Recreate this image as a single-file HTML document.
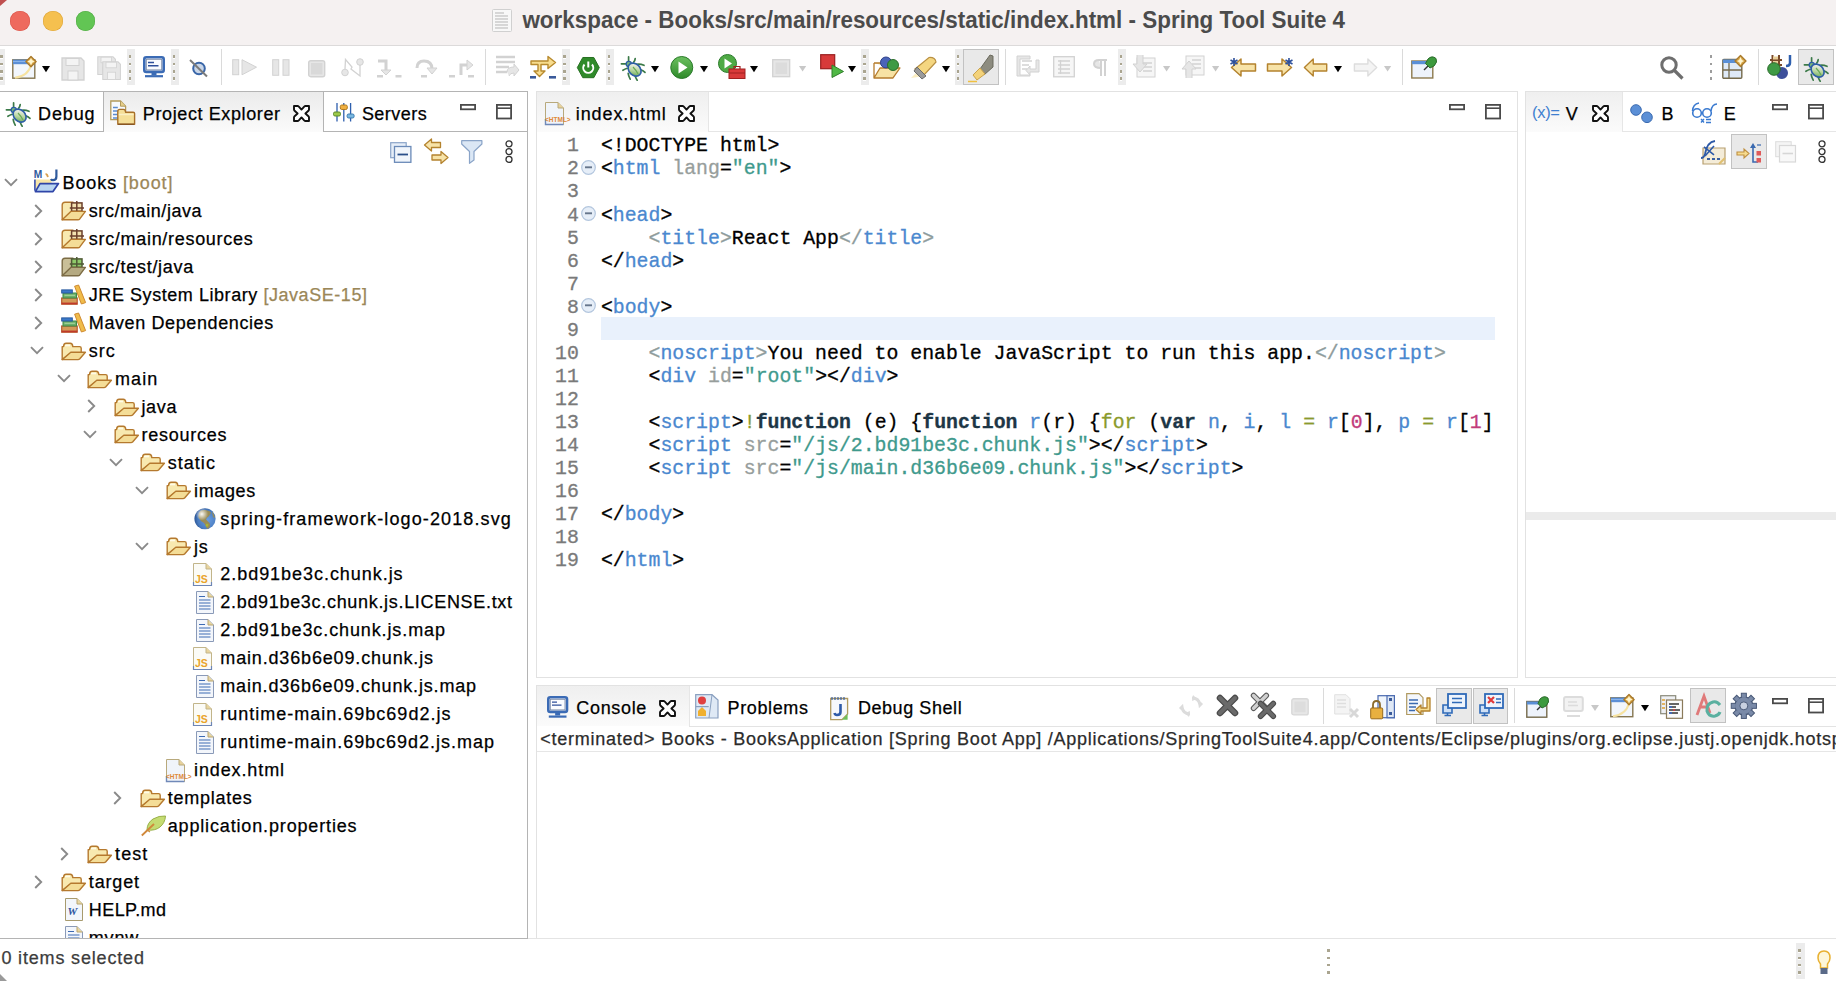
<!DOCTYPE html><html><head><meta charset="utf-8"><style>
*{margin:0;padding:0;box-sizing:border-box}
html,body{width:1836px;height:981px;overflow:hidden;background:#fff;position:relative;font-family:"Liberation Sans",sans-serif}
.t{position:absolute;font-size:18px;line-height:28px;white-space:pre;color:#000;-webkit-text-stroke:0.25px currentColor}
.m{position:absolute;font-family:"Liberation Mono",monospace;font-size:19.83px;line-height:23px;white-space:pre;color:#000;transform:scaleY(1.06);transform-origin:0 17px;-webkit-text-stroke:0.3px currentColor}
svg{overflow:visible}
</style></head><body>

<div style="position:absolute;left:0px;top:0px;width:1836px;height:45px;background:#f5f1f1"></div>
<div style="position:absolute;left:0px;top:44.5px;width:1836px;height:1.4px;background:#dcdada"></div>
<div style="position:absolute;left:10.1px;top:11.3px;width:19.6px;height:19.6px;border-radius:50%;background:#ee6a5e;box-shadow:inset 0 0 0 0.5px #d9574c"></div>
<div style="position:absolute;left:43.0px;top:11.3px;width:19.6px;height:19.6px;border-radius:50%;background:#f5c04f;box-shadow:inset 0 0 0 0.5px #dca43a"></div>
<div style="position:absolute;left:75.9px;top:11.3px;width:19.6px;height:19.6px;border-radius:50%;background:#62c554;box-shadow:inset 0 0 0 0.5px #52ab45"></div>
<svg style="position:absolute;left:492px;top:9px" width="20" height="23" viewBox="0 0 20 23"><rect x="0.5" y="0.5" width="19" height="22" rx="1" fill="#f8f8f8" stroke="#d0d0d0"/><path d="M3 4h9M3 7h13M3 10h13M3 13h13M3 16h13M3 19h13" stroke="#b5b5b5" stroke-width="1"/></svg>
<div style="position:absolute;left:522.4px;top:10.4px;font-weight:bold;font-size:22.4px;line-height:22.4px;white-space:pre;color:#4b4b4b;letter-spacing:0.025px;transform:scaleY(1.03);transform-origin:0 17px">workspace - Books/src/main/resources/static/index.html - Spring Tool Suite 4</div>
<div style="position:absolute;left:0px;top:45.9px;width:1836px;height:45.1px;background:#fff"></div>
<div style="position:absolute;left:0px;top:91px;width:528px;height:848px;border:1px solid #b4b4b4;border-left:none;background:#fff"></div>
<div style="position:absolute;left:103px;top:92px;width:221px;height:40px;background:linear-gradient(#ebebeb,#fbfbfb)"></div>
<div style="position:absolute;left:0px;top:131px;width:103px;height:1px;background:#b4b4b4"></div>
<div style="position:absolute;left:103px;top:92px;width:1px;height:40px;background:#b4b4b4"></div>
<div style="position:absolute;left:323px;top:92px;width:1px;height:40px;background:#b4b4b4"></div>
<div style="position:absolute;left:323px;top:131px;width:204px;height:1px;background:#b4b4b4"></div>
<div style="position:absolute;left:536px;top:91px;width:982px;height:587px;border:1px solid #e2e2e2;background:#fff"></div>
<div style="position:absolute;left:537px;top:92px;width:171px;height:40px;background:linear-gradient(#efefef,#fbfbfb)"></div>
<div style="position:absolute;left:708px;top:92px;width:1px;height:40px;background:#e6e6e6"></div>
<div style="position:absolute;left:708px;top:131px;width:809px;height:1px;background:#e6e6e6"></div>
<div style="position:absolute;left:1525px;top:91px;width:311px;height:587px;border:1px solid #e2e2e2;border-right:none;background:#fff"></div>
<div style="position:absolute;left:1526px;top:92px;width:97px;height:40px;background:linear-gradient(#efefef,#fbfbfb)"></div>
<div style="position:absolute;left:1622px;top:92px;width:1px;height:40px;background:#e6e6e6"></div>
<div style="position:absolute;left:1622px;top:131px;width:214px;height:1px;background:#e6e6e6"></div>
<div style="position:absolute;left:1526px;top:512px;width:310px;height:8px;background:#ebebeb"></div>
<div style="position:absolute;left:536px;top:685px;width:1300px;height:254px;border:1px solid #e2e2e2;border-right:none;background:#fff"></div>
<div style="position:absolute;left:537px;top:686px;width:152px;height:40px;background:linear-gradient(#efefef,#fbfbfb)"></div>
<div style="position:absolute;left:689px;top:686px;width:1px;height:40px;background:#e6e6e6"></div>
<div style="position:absolute;left:689px;top:726px;width:1147px;height:1px;background:#e3e3e3"></div>
<div style="position:absolute;left:537px;top:751px;width:1299px;height:1px;background:#e6e6e6"></div>
<div style="position:absolute;left:0px;top:938px;width:1836px;height:1px;background:#e4e4e4"></div>
<div style="position:absolute;left:0px;top:939px;width:1836px;height:42px;background:#fff"></div>
<svg style="position:absolute;left:3.9px;top:178.2px" width="14" height="9" viewBox="0 0 14 9"><path d="M1 1.2 L7 7.2 L13 1.2" stroke="#8a8a8a" stroke-width="1.9" fill="none"/></svg>
<svg style="position:absolute;left:34.2px;top:169.0px" width="25" height="24" viewBox="0 0 25 24"><path d="M0.9 21.5V10.6H17.5V14.4H5.5L1.2 21.8Z" fill="#f8e6a8"/><path d="M0.9 10.6V21.8" stroke="#3a4fb0" stroke-width="1.6"/><text x="-0.3" y="8.9" font-size="10.2" font-weight="bold" fill="#2f5a9c" font-family="Liberation Sans">M</text><path d="M11.5 5.2Q13.5 5 13.8 8.2" stroke="#d8a050" stroke-width="1.8" fill="none"/><path d="M22.4 0.6V7.6Q22.4 11.2 19 11.2Q17.5 11.2 17 10" stroke="#2f5a9c" stroke-width="2.2" fill="none"/><path d="M1.4 22.6L6 14.6H24.5L19 22.6Z" fill="#b9d5f2" stroke="#2f45a8" stroke-width="1.7" stroke-linejoin="round"/></svg>
<div class="t" style="left:62.5px;top:169.0px;letter-spacing:0.9px">Books<span style="color:#9b8758"> [boot]</span></div>
<svg style="position:absolute;left:34.0px;top:203.7px" width="9" height="14" viewBox="0 0 9 14"><path d="M1.2 1 L7.2 7 L1.2 13" stroke="#8a8a8a" stroke-width="1.9" fill="none"/></svg>
<svg style="position:absolute;left:61.0px;top:200.8px" width="25" height="19.5" viewBox="0 0 25 19.5"><path d="M1.2 18.8V4Q1.2 1.2 4 1.2H12V10.5Z" fill="#f8e9b0" stroke="#b5792e" stroke-width="1.4" stroke-linejoin="round"/><rect x="10.6" y="1.9" width="10.4" height="8.4" fill="#f3e2b0" stroke="#6b3f2b" stroke-width="1.5"/><path d="M15.8 0V10.5M8.8 7.1H23" stroke="#6b3f2b" stroke-width="1.5"/><path d="M1.2 18.8L9.8 10.4H24.4L18.6 18.2Q18 18.8 17 18.8Z" fill="#f4dd97" stroke="#b5792e" stroke-width="1.4" stroke-linejoin="round"/></svg>
<div class="t" style="left:88.8px;top:197.0px;letter-spacing:0.567px">src/main/java</div>
<svg style="position:absolute;left:34.0px;top:231.6px" width="9" height="14" viewBox="0 0 9 14"><path d="M1.2 1 L7.2 7 L1.2 13" stroke="#8a8a8a" stroke-width="1.9" fill="none"/></svg>
<svg style="position:absolute;left:61.0px;top:228.7px" width="25" height="19.5" viewBox="0 0 25 19.5"><path d="M1.2 18.8V4Q1.2 1.2 4 1.2H12V10.5Z" fill="#f8e9b0" stroke="#b5792e" stroke-width="1.4" stroke-linejoin="round"/><rect x="10.6" y="1.9" width="10.4" height="8.4" fill="#f3e2b0" stroke="#6b3f2b" stroke-width="1.5"/><path d="M15.8 0V10.5M8.8 7.1H23" stroke="#6b3f2b" stroke-width="1.5"/><path d="M1.2 18.8L9.8 10.4H24.4L18.6 18.2Q18 18.8 17 18.8Z" fill="#f4dd97" stroke="#b5792e" stroke-width="1.4" stroke-linejoin="round"/></svg>
<div class="t" style="left:88.8px;top:224.9px;letter-spacing:0.694px">src/main/resources</div>
<svg style="position:absolute;left:34.0px;top:259.6px" width="9" height="14" viewBox="0 0 9 14"><path d="M1.2 1 L7.2 7 L1.2 13" stroke="#8a8a8a" stroke-width="1.9" fill="none"/></svg>
<svg style="position:absolute;left:61.0px;top:256.7px" width="25" height="19.5" viewBox="0 0 25 19.5"><path d="M1.2 18.8V4Q1.2 1.2 4 1.2H12V10.5Z" fill="#c9bf98" stroke="#7c6c45" stroke-width="1.4" stroke-linejoin="round"/><rect x="10.6" y="1.9" width="10.4" height="8.4" fill="#8fca6a" stroke="#4f5a35" stroke-width="1.5"/><path d="M15.8 0V10.5M8.8 7.1H23" stroke="#4f5a35" stroke-width="1.5"/><path d="M1.2 18.8L9.8 10.4H24.4L18.6 18.2Q18 18.8 17 18.8Z" fill="#b5aa82" stroke="#7c6c45" stroke-width="1.4" stroke-linejoin="round"/></svg>
<div class="t" style="left:88.8px;top:252.9px;letter-spacing:0.7px">src/test/java</div>
<svg style="position:absolute;left:34.0px;top:287.5px" width="9" height="14" viewBox="0 0 9 14"><path d="M1.2 1 L7.2 7 L1.2 13" stroke="#8a8a8a" stroke-width="1.9" fill="none"/></svg>
<svg style="position:absolute;left:61.0px;top:284.8px" width="25" height="20" viewBox="0 0 25 20"><rect x="0.7" y="13" width="15.5" height="6.2" fill="#d49a58" stroke="#b8582e" stroke-width="1.2"/><rect x="0.7" y="17.6" width="15.5" height="1.6" fill="#c0392a"/><rect x="2" y="8" width="13.5" height="5" fill="#6db06a" stroke="#3f8a45" stroke-width="1"/><path d="M3.5 10.3H14" stroke="#a8d8a0" stroke-width="1"/><rect x="0.7" y="4.9" width="10.6" height="3.1" fill="#3a78c8" stroke="#2a5aa0" stroke-width="1"/><path d="M13.6 1.2L17.6 0L24.6 17.6L20.4 19Z" fill="#f0bc4a" stroke="#d08a30" stroke-width="1" stroke-linejoin="round"/></svg>
<div class="t" style="left:88.8px;top:280.8px;letter-spacing:0.555px">JRE System Library<span style="color:#9b8758"> [JavaSE-15]</span></div>
<svg style="position:absolute;left:34.0px;top:315.5px" width="9" height="14" viewBox="0 0 9 14"><path d="M1.2 1 L7.2 7 L1.2 13" stroke="#8a8a8a" stroke-width="1.9" fill="none"/></svg>
<svg style="position:absolute;left:61.0px;top:312.8px" width="25" height="20" viewBox="0 0 25 20"><rect x="0.7" y="13" width="15.5" height="6.2" fill="#d49a58" stroke="#b8582e" stroke-width="1.2"/><rect x="0.7" y="17.6" width="15.5" height="1.6" fill="#c0392a"/><rect x="2" y="8" width="13.5" height="5" fill="#6db06a" stroke="#3f8a45" stroke-width="1"/><path d="M3.5 10.3H14" stroke="#a8d8a0" stroke-width="1"/><rect x="0.7" y="4.9" width="10.6" height="3.1" fill="#3a78c8" stroke="#2a5aa0" stroke-width="1"/><path d="M13.6 1.2L17.6 0L24.6 17.6L20.4 19Z" fill="#f0bc4a" stroke="#d08a30" stroke-width="1" stroke-linejoin="round"/></svg>
<div class="t" style="left:88.8px;top:308.8px;letter-spacing:0.606px">Maven Dependencies</div>
<svg style="position:absolute;left:30.2px;top:346.0px" width="14" height="9" viewBox="0 0 14 9"><path d="M1 1.2 L7 7.2 L13 1.2" stroke="#8a8a8a" stroke-width="1.9" fill="none"/></svg>
<svg style="position:absolute;left:61.1px;top:341.6px" width="25" height="19" viewBox="0 0 25 19"><path d="M1.2 17.6V4.6H2.6Q2.6 1.2 5.2 1.2H9.2Q11.6 1.2 11.8 4.6H18.6Q20.2 4.6 20.2 6.2V11H10Z" fill="#f8e9b0" stroke="#b5792e" stroke-width="1.4" stroke-linejoin="round"/><path d="M4 3.5H9" stroke="#fffbe8" stroke-width="1.6"/><path d="M1.2 17.6L9.8 10.2H24.4L18.6 17Q18 17.6 17 17.6Z" fill="#f4dd97" stroke="#b5792e" stroke-width="1.4" stroke-linejoin="round"/></svg>
<div class="t" style="left:88.8px;top:336.8px;letter-spacing:0.95px">src</div>
<svg style="position:absolute;left:56.5px;top:373.9px" width="14" height="9" viewBox="0 0 14 9"><path d="M1 1.2 L7 7.2 L13 1.2" stroke="#8a8a8a" stroke-width="1.9" fill="none"/></svg>
<svg style="position:absolute;left:87.4px;top:369.5px" width="25" height="19" viewBox="0 0 25 19"><path d="M1.2 17.6V4.6H2.6Q2.6 1.2 5.2 1.2H9.2Q11.6 1.2 11.8 4.6H18.6Q20.2 4.6 20.2 6.2V11H10Z" fill="#f8e9b0" stroke="#b5792e" stroke-width="1.4" stroke-linejoin="round"/><path d="M4 3.5H9" stroke="#fffbe8" stroke-width="1.6"/><path d="M1.2 17.6L9.8 10.2H24.4L18.6 17Q18 17.6 17 17.6Z" fill="#f4dd97" stroke="#b5792e" stroke-width="1.4" stroke-linejoin="round"/></svg>
<div class="t" style="left:115.1px;top:364.7px;letter-spacing:1.033px">main</div>
<svg style="position:absolute;left:86.6px;top:399.4px" width="9" height="14" viewBox="0 0 9 14"><path d="M1.2 1 L7.2 7 L1.2 13" stroke="#8a8a8a" stroke-width="1.9" fill="none"/></svg>
<svg style="position:absolute;left:113.7px;top:397.5px" width="25" height="19" viewBox="0 0 25 19"><path d="M1.2 17.6V4.6H2.6Q2.6 1.2 5.2 1.2H9.2Q11.6 1.2 11.8 4.6H18.6Q20.2 4.6 20.2 6.2V11H10Z" fill="#f8e9b0" stroke="#b5792e" stroke-width="1.4" stroke-linejoin="round"/><path d="M4 3.5H9" stroke="#fffbe8" stroke-width="1.6"/><path d="M1.2 17.6L9.8 10.2H24.4L18.6 17Q18 17.6 17 17.6Z" fill="#f4dd97" stroke="#b5792e" stroke-width="1.4" stroke-linejoin="round"/></svg>
<div class="t" style="left:141.4px;top:392.7px;letter-spacing:0.7px">java</div>
<svg style="position:absolute;left:82.8px;top:429.8px" width="14" height="9" viewBox="0 0 14 9"><path d="M1 1.2 L7 7.2 L13 1.2" stroke="#8a8a8a" stroke-width="1.9" fill="none"/></svg>
<svg style="position:absolute;left:113.7px;top:425.4px" width="25" height="19" viewBox="0 0 25 19"><path d="M1.2 17.6V4.6H2.6Q2.6 1.2 5.2 1.2H9.2Q11.6 1.2 11.8 4.6H18.6Q20.2 4.6 20.2 6.2V11H10Z" fill="#f8e9b0" stroke="#b5792e" stroke-width="1.4" stroke-linejoin="round"/><path d="M4 3.5H9" stroke="#fffbe8" stroke-width="1.6"/><path d="M1.2 17.6L9.8 10.2H24.4L18.6 17Q18 17.6 17 17.6Z" fill="#f4dd97" stroke="#b5792e" stroke-width="1.4" stroke-linejoin="round"/></svg>
<div class="t" style="left:141.4px;top:420.6px;letter-spacing:0.762px">resources</div>
<svg style="position:absolute;left:109.1px;top:457.8px" width="14" height="9" viewBox="0 0 14 9"><path d="M1 1.2 L7 7.2 L13 1.2" stroke="#8a8a8a" stroke-width="1.9" fill="none"/></svg>
<svg style="position:absolute;left:140.0px;top:453.4px" width="25" height="19" viewBox="0 0 25 19"><path d="M1.2 17.6V4.6H2.6Q2.6 1.2 5.2 1.2H9.2Q11.6 1.2 11.8 4.6H18.6Q20.2 4.6 20.2 6.2V11H10Z" fill="#f8e9b0" stroke="#b5792e" stroke-width="1.4" stroke-linejoin="round"/><path d="M4 3.5H9" stroke="#fffbe8" stroke-width="1.6"/><path d="M1.2 17.6L9.8 10.2H24.4L18.6 17Q18 17.6 17 17.6Z" fill="#f4dd97" stroke="#b5792e" stroke-width="1.4" stroke-linejoin="round"/></svg>
<div class="t" style="left:167.7px;top:448.6px;letter-spacing:1.04px">static</div>
<svg style="position:absolute;left:135.4px;top:485.8px" width="14" height="9" viewBox="0 0 14 9"><path d="M1 1.2 L7 7.2 L13 1.2" stroke="#8a8a8a" stroke-width="1.9" fill="none"/></svg>
<svg style="position:absolute;left:166.3px;top:481.4px" width="25" height="19" viewBox="0 0 25 19"><path d="M1.2 17.6V4.6H2.6Q2.6 1.2 5.2 1.2H9.2Q11.6 1.2 11.8 4.6H18.6Q20.2 4.6 20.2 6.2V11H10Z" fill="#f8e9b0" stroke="#b5792e" stroke-width="1.4" stroke-linejoin="round"/><path d="M4 3.5H9" stroke="#fffbe8" stroke-width="1.6"/><path d="M1.2 17.6L9.8 10.2H24.4L18.6 17Q18 17.6 17 17.6Z" fill="#f4dd97" stroke="#b5792e" stroke-width="1.4" stroke-linejoin="round"/></svg>
<div class="t" style="left:194.0px;top:476.6px;letter-spacing:0.64px">images</div>
<svg style="position:absolute;left:194.0px;top:508.0px" width="22" height="21.5" viewBox="0 0 22 21.5"><defs><radialGradient id="gg" cx="0.62" cy="0.55" r="0.6"><stop offset="0" stop-color="#6a9ee0"/><stop offset="0.75" stop-color="#4a7cc0"/><stop offset="1" stop-color="#2f5a9a"/></radialGradient><radialGradient id="gh" cx="0.35" cy="0.28" r="0.3"><stop offset="0" stop-color="#ffffff" stop-opacity="0.95"/><stop offset="1" stop-color="#ffffff" stop-opacity="0"/></radialGradient></defs><circle cx="11" cy="10.75" r="10.6" fill="url(#gg)"/><path d="M7 2.5Q12 1 16 3.5L17 5L14.5 8.5Q12.5 9.5 12 11.5L14.5 14Q17 16 15.5 19.5L13 21Q11.5 17 10 15Q6 13 4.5 9.5Q4 5 7 2.5Z" fill="#9a8c56"/><path d="M12.5 15.5l2 1l-1 2.5l-2 -1Z" fill="#a8b830"/><path d="M18 3.5Q20.5 6 21 10L19 9Z" fill="#9a8c56"/><circle cx="11" cy="10.75" r="10.6" fill="url(#gh)"/></svg>
<div class="t" style="left:220.3px;top:504.5px;letter-spacing:1.117px">spring-framework-logo-2018.svg</div>
<svg style="position:absolute;left:135.4px;top:541.7px" width="14" height="9" viewBox="0 0 14 9"><path d="M1 1.2 L7 7.2 L13 1.2" stroke="#8a8a8a" stroke-width="1.9" fill="none"/></svg>
<svg style="position:absolute;left:166.3px;top:537.3px" width="25" height="19" viewBox="0 0 25 19"><path d="M1.2 17.6V4.6H2.6Q2.6 1.2 5.2 1.2H9.2Q11.6 1.2 11.8 4.6H18.6Q20.2 4.6 20.2 6.2V11H10Z" fill="#f8e9b0" stroke="#b5792e" stroke-width="1.4" stroke-linejoin="round"/><path d="M4 3.5H9" stroke="#fffbe8" stroke-width="1.6"/><path d="M1.2 17.6L9.8 10.2H24.4L18.6 17Q18 17.6 17 17.6Z" fill="#f4dd97" stroke="#b5792e" stroke-width="1.4" stroke-linejoin="round"/></svg>
<div class="t" style="left:194.0px;top:532.5px;letter-spacing:0.7px">js</div>
<svg style="position:absolute;left:192.7px;top:562.7px" width="19" height="23" viewBox="0 0 19 23"><path d="M0.5 0.5 H13 L18.5 6 V22.5 H0.5Z" fill="#fbfbf6" stroke="#c2b58a"/><path d="M13 0.5 V6 H18.5" fill="#e9d49c" stroke="#c2b58a"/><path d="M0.5 19 V22.5 H18.5 V19" stroke="#6e86b6" stroke-width="1.2" fill="none"/><text x="2" y="20" font-size="10.5" font-weight="bold" fill="#e9a42a" font-family="Liberation Sans">JS</text></svg>
<div class="t" style="left:220.3px;top:560.4px;letter-spacing:0.956px">2.bd91be3c.chunk.js</div>
<svg style="position:absolute;left:196.3px;top:590.7px" width="18" height="23" viewBox="0 0 18 23"><path d="M0.5 0.5 H12 L17.5 6 V22.5 H0.5Z" fill="#f3f6fb" stroke="#8a9ab8"/><path d="M12 0.5 V6 H17.5" fill="#e8d7a3" stroke="#b8a470"/><path d="M3 5.5H9M3 9H14.5M3 12H14.5M3 15H14.5M3 18H14.5" stroke="#3d6ab3" stroke-width="1.2"/></svg>
<div class="t" style="left:220.3px;top:588.4px;letter-spacing:0.687px">2.bd91be3c.chunk.js.LICENSE.txt</div>
<svg style="position:absolute;left:196.3px;top:618.7px" width="18" height="23" viewBox="0 0 18 23"><path d="M0.5 0.5 H12 L17.5 6 V22.5 H0.5Z" fill="#f3f6fb" stroke="#8a9ab8"/><path d="M12 0.5 V6 H17.5" fill="#e8d7a3" stroke="#b8a470"/><path d="M3 5.5H9M3 9H14.5M3 12H14.5M3 15H14.5M3 18H14.5" stroke="#3d6ab3" stroke-width="1.2"/></svg>
<div class="t" style="left:220.3px;top:616.4px;letter-spacing:0.886px">2.bd91be3c.chunk.js.map</div>
<svg style="position:absolute;left:192.7px;top:646.6px" width="19" height="23" viewBox="0 0 19 23"><path d="M0.5 0.5 H13 L18.5 6 V22.5 H0.5Z" fill="#fbfbf6" stroke="#c2b58a"/><path d="M13 0.5 V6 H18.5" fill="#e9d49c" stroke="#c2b58a"/><path d="M0.5 19 V22.5 H18.5 V19" stroke="#6e86b6" stroke-width="1.2" fill="none"/><text x="2" y="20" font-size="10.5" font-weight="bold" fill="#e9a42a" font-family="Liberation Sans">JS</text></svg>
<div class="t" style="left:220.3px;top:644.3px;letter-spacing:0.838px">main.d36b6e09.chunk.js</div>
<svg style="position:absolute;left:196.3px;top:674.6px" width="18" height="23" viewBox="0 0 18 23"><path d="M0.5 0.5 H12 L17.5 6 V22.5 H0.5Z" fill="#f3f6fb" stroke="#8a9ab8"/><path d="M12 0.5 V6 H17.5" fill="#e8d7a3" stroke="#b8a470"/><path d="M3 5.5H9M3 9H14.5M3 12H14.5M3 15H14.5M3 18H14.5" stroke="#3d6ab3" stroke-width="1.2"/></svg>
<div class="t" style="left:220.3px;top:672.3px;letter-spacing:0.824px">main.d36b6e09.chunk.js.map</div>
<svg style="position:absolute;left:192.7px;top:702.5px" width="19" height="23" viewBox="0 0 19 23"><path d="M0.5 0.5 H13 L18.5 6 V22.5 H0.5Z" fill="#fbfbf6" stroke="#c2b58a"/><path d="M13 0.5 V6 H18.5" fill="#e9d49c" stroke="#c2b58a"/><path d="M0.5 19 V22.5 H18.5 V19" stroke="#6e86b6" stroke-width="1.2" fill="none"/><text x="2" y="20" font-size="10.5" font-weight="bold" fill="#e9a42a" font-family="Liberation Sans">JS</text></svg>
<div class="t" style="left:220.3px;top:700.2px;letter-spacing:1.0px">runtime-main.69bc69d2.js</div>
<svg style="position:absolute;left:196.3px;top:730.5px" width="18" height="23" viewBox="0 0 18 23"><path d="M0.5 0.5 H12 L17.5 6 V22.5 H0.5Z" fill="#f3f6fb" stroke="#8a9ab8"/><path d="M12 0.5 V6 H17.5" fill="#e8d7a3" stroke="#b8a470"/><path d="M3 5.5H9M3 9H14.5M3 12H14.5M3 15H14.5M3 18H14.5" stroke="#3d6ab3" stroke-width="1.2"/></svg>
<div class="t" style="left:220.3px;top:728.2px;letter-spacing:0.985px">runtime-main.69bc69d2.js.map</div>
<svg style="position:absolute;left:166.2px;top:758.9px" width="25" height="23" viewBox="0 0 25 23"><path d="M0.5 0.5 H13 L18.5 6 V22.5 H0.5Z" fill="#f0f4fa" stroke="#b8a97c"/><path d="M13 0.5 V6 H18.5" fill="#e8d29a" stroke="#b8a97c"/><path d="M0.5 17 V22.5 H18.5" stroke="#7089b8" stroke-width="1.4" fill="none"/><text x="0" y="19.5" font-size="6.5" font-weight="bold" fill="#e08a3a" font-family="Liberation Sans">&lt;HTML&gt;</text></svg>
<div class="t" style="left:194.0px;top:756.2px;letter-spacing:0.889px">index.html</div>
<svg style="position:absolute;left:112.9px;top:790.8px" width="9" height="14" viewBox="0 0 9 14"><path d="M1.2 1 L7.2 7 L1.2 13" stroke="#8a8a8a" stroke-width="1.9" fill="none"/></svg>
<svg style="position:absolute;left:140.0px;top:788.9px" width="25" height="19" viewBox="0 0 25 19"><path d="M1.2 17.6V4.6H2.6Q2.6 1.2 5.2 1.2H9.2Q11.6 1.2 11.8 4.6H18.6Q20.2 4.6 20.2 6.2V11H10Z" fill="#f8e9b0" stroke="#b5792e" stroke-width="1.4" stroke-linejoin="round"/><path d="M4 3.5H9" stroke="#fffbe8" stroke-width="1.6"/><path d="M1.2 17.6L9.8 10.2H24.4L18.6 17Q18 17.6 17 17.6Z" fill="#f4dd97" stroke="#b5792e" stroke-width="1.4" stroke-linejoin="round"/></svg>
<div class="t" style="left:167.7px;top:784.1px;letter-spacing:0.762px">templates</div>
<svg style="position:absolute;left:140.7px;top:814.8px" width="25" height="21" viewBox="0 0 25 21"><path d="M6 15Q6 8 12 4Q18 0.5 24.5 1Q24 8 19 12Q14 16 6 15Z" fill="#c5dc72" stroke="#98b048" stroke-width="1"/><path d="M0.8 20.5L13 9" stroke="#d0883a" stroke-width="1.8"/><path d="M6 15L9 17" stroke="#d0883a" stroke-width="1.2"/></svg>
<div class="t" style="left:167.7px;top:812.1px;letter-spacing:0.848px">application.properties</div>
<svg style="position:absolute;left:60.3px;top:846.7px" width="9" height="14" viewBox="0 0 9 14"><path d="M1.2 1 L7.2 7 L1.2 13" stroke="#8a8a8a" stroke-width="1.9" fill="none"/></svg>
<svg style="position:absolute;left:87.4px;top:844.8px" width="25" height="19" viewBox="0 0 25 19"><path d="M1.2 17.6V4.6H2.6Q2.6 1.2 5.2 1.2H9.2Q11.6 1.2 11.8 4.6H18.6Q20.2 4.6 20.2 6.2V11H10Z" fill="#f8e9b0" stroke="#b5792e" stroke-width="1.4" stroke-linejoin="round"/><path d="M4 3.5H9" stroke="#fffbe8" stroke-width="1.6"/><path d="M1.2 17.6L9.8 10.2H24.4L18.6 17Q18 17.6 17 17.6Z" fill="#f4dd97" stroke="#b5792e" stroke-width="1.4" stroke-linejoin="round"/></svg>
<div class="t" style="left:115.1px;top:840.0px;letter-spacing:1.067px">test</div>
<svg style="position:absolute;left:34.0px;top:874.7px" width="9" height="14" viewBox="0 0 9 14"><path d="M1.2 1 L7.2 7 L1.2 13" stroke="#8a8a8a" stroke-width="1.9" fill="none"/></svg>
<svg style="position:absolute;left:61.1px;top:872.8px" width="25" height="19" viewBox="0 0 25 19"><path d="M1.2 17.6V4.6H2.6Q2.6 1.2 5.2 1.2H9.2Q11.6 1.2 11.8 4.6H18.6Q20.2 4.6 20.2 6.2V11H10Z" fill="#f8e9b0" stroke="#b5792e" stroke-width="1.4" stroke-linejoin="round"/><path d="M4 3.5H9" stroke="#fffbe8" stroke-width="1.6"/><path d="M1.2 17.6L9.8 10.2H24.4L18.6 17Q18 17.6 17 17.6Z" fill="#f4dd97" stroke="#b5792e" stroke-width="1.4" stroke-linejoin="round"/></svg>
<div class="t" style="left:88.8px;top:868.0px;letter-spacing:0.84px">target</div>
<svg style="position:absolute;left:64.8px;top:898.3px" width="18" height="23" viewBox="0 0 18 23"><path d="M0.5 0.5 H12 L17.5 6 V22.5 H0.5Z" fill="#f3f6fb" stroke="#a89b6e"/><path d="M12 0.5 V6 H17.5" fill="#e8d7a3" stroke="#b8a470"/><text x="2.5" y="17" font-size="11" font-weight="bold" font-style="italic" fill="#2d55a0" font-family="Liberation Serif">W</text></svg>
<div class="t" style="left:88.8px;top:896.0px;letter-spacing:0.417px">HELP.md</div>
<svg style="position:absolute;left:64.8px;top:926.2px" width="18" height="23" viewBox="0 0 18 23"><path d="M0.5 0.5 H12 L17.5 6 V22.5 H0.5Z" fill="#f3f6fb" stroke="#8a9ab8"/><path d="M12 0.5 V6 H17.5" fill="#e8d7a3" stroke="#b8a470"/><path d="M3 5.5H9M3 9H14.5M3 12H14.5M3 15H14.5M3 18H14.5" stroke="#3d6ab3" stroke-width="1.2"/></svg>
<div class="t" style="left:88.8px;top:923.9px;letter-spacing:0.8px">mvnw</div>
<div style="position:absolute;left:0px;top:938px;width:528px;height:43px;background:#fff;border-top:1px solid #b4b4b4"></div>
<div style="position:absolute;left:601px;top:317.3px;width:894px;height:23px;background:#e9f1fc"></div>
<div class="m" style="left:0px;width:578.8px;text-align:right;top:134.3px;color:#7a7a7a">1</div>
<div class="m" style="left:600.9px;top:134.3px"><span style="color:#000">&lt;!DOCTYPE html&gt;</span></div>
<div class="m" style="left:0px;width:578.8px;text-align:right;top:157.4px;color:#7a7a7a">2</div>
<div class="m" style="left:600.9px;top:157.4px"><span style="color:#000">&lt;</span><span style="color:#4a88cf">html</span><span style="color:#000"> </span><span style="color:#979e9c">lang</span><span style="color:#000">=</span><span style="color:#3f9a8d">"en"</span><span style="color:#000">&gt;</span></div>
<div class="m" style="left:0px;width:578.8px;text-align:right;top:180.4px;color:#7a7a7a">3</div>
<div class="m" style="left:0px;width:578.8px;text-align:right;top:203.5px;color:#7a7a7a">4</div>
<div class="m" style="left:600.9px;top:203.5px"><span style="color:#000">&lt;</span><span style="color:#4a88cf">head</span><span style="color:#000">&gt;</span></div>
<div class="m" style="left:0px;width:578.8px;text-align:right;top:226.5px;color:#7a7a7a">5</div>
<div class="m" style="left:600.9px;top:226.5px"><span style="color:#000">    </span><span style="color:#8e9c9c">&lt;</span><span style="color:#4a88cf">title</span><span style="color:#8e9c9c">&gt;</span><span style="color:#000">React App</span><span style="color:#8e9c9c">&lt;/</span><span style="color:#4a88cf">title</span><span style="color:#8e9c9c">&gt;</span></div>
<div class="m" style="left:0px;width:578.8px;text-align:right;top:249.6px;color:#7a7a7a">6</div>
<div class="m" style="left:600.9px;top:249.6px"><span style="color:#000">&lt;/</span><span style="color:#4a88cf">head</span><span style="color:#000">&gt;</span></div>
<div class="m" style="left:0px;width:578.8px;text-align:right;top:272.6px;color:#7a7a7a">7</div>
<div class="m" style="left:0px;width:578.8px;text-align:right;top:295.6px;color:#7a7a7a">8</div>
<div class="m" style="left:600.9px;top:295.6px"><span style="color:#000">&lt;</span><span style="color:#4a88cf">body</span><span style="color:#000">&gt;</span></div>
<div class="m" style="left:0px;width:578.8px;text-align:right;top:318.7px;color:#7a7a7a">9</div>
<div class="m" style="left:0px;width:578.8px;text-align:right;top:341.8px;color:#7a7a7a">10</div>
<div class="m" style="left:600.9px;top:341.8px"><span style="color:#000">    </span><span style="color:#8e9c9c">&lt;</span><span style="color:#4a88cf">noscript</span><span style="color:#8e9c9c">&gt;</span><span style="color:#000">You need to enable JavaScript to run this app.</span><span style="color:#8e9c9c">&lt;/</span><span style="color:#4a88cf">noscript</span><span style="color:#8e9c9c">&gt;</span></div>
<div class="m" style="left:0px;width:578.8px;text-align:right;top:364.8px;color:#7a7a7a">11</div>
<div class="m" style="left:600.9px;top:364.8px"><span style="color:#000">    </span><span style="color:#000">&lt;</span><span style="color:#4a88cf">div</span><span style="color:#000"> </span><span style="color:#979e9c">id</span><span style="color:#000">=</span><span style="color:#3f9a8d">"root"</span><span style="color:#000">&gt;&lt;/</span><span style="color:#4a88cf">div</span><span style="color:#000">&gt;</span></div>
<div class="m" style="left:0px;width:578.8px;text-align:right;top:387.9px;color:#7a7a7a">12</div>
<div class="m" style="left:0px;width:578.8px;text-align:right;top:410.9px;color:#7a7a7a">13</div>
<div class="m" style="left:600.9px;top:410.9px"><span style="color:#000">    </span><span style="color:#000">&lt;</span><span style="color:#4a88cf">script</span><span style="color:#000">&gt;</span><span style="color:#8a9a2c">!</span><span style="color:#1d3646;font-weight:bold">function</span><span style="color:#000"> (e) {</span><span style="color:#1d3646;font-weight:bold">function</span><span style="color:#000"> </span><span style="color:#4a88cf">r</span><span style="color:#000">(r) {</span><span style="color:#8a9a2c">for</span><span style="color:#000"> (</span><span style="color:#1d3646;font-weight:bold">var</span><span style="color:#000"> </span><span style="color:#4a88cf">n</span><span style="color:#000">, </span><span style="color:#4a88cf">i</span><span style="color:#000">, </span><span style="color:#4a88cf">l</span><span style="color:#000"> </span><span style="color:#8a9a2c">=</span><span style="color:#000"> </span><span style="color:#4a88cf">r</span><span style="color:#000">[</span><span style="color:#c23b7b">0</span><span style="color:#000">], </span><span style="color:#4a88cf">p</span><span style="color:#000"> </span><span style="color:#8a9a2c">=</span><span style="color:#000"> </span><span style="color:#4a88cf">r</span><span style="color:#000">[</span><span style="color:#c23b7b">1</span><span style="color:#000">]</span></div>
<div class="m" style="left:0px;width:578.8px;text-align:right;top:434.0px;color:#7a7a7a">14</div>
<div class="m" style="left:600.9px;top:434.0px"><span style="color:#000">    </span><span style="color:#000">&lt;</span><span style="color:#4a88cf">script</span><span style="color:#000"> </span><span style="color:#979e9c">src</span><span style="color:#000">=</span><span style="color:#3f9a8d">"/js/2.bd91be3c.chunk.js"</span><span style="color:#000">&gt;&lt;/</span><span style="color:#4a88cf">script</span><span style="color:#000">&gt;</span></div>
<div class="m" style="left:0px;width:578.8px;text-align:right;top:457.0px;color:#7a7a7a">15</div>
<div class="m" style="left:600.9px;top:457.0px"><span style="color:#000">    </span><span style="color:#000">&lt;</span><span style="color:#4a88cf">script</span><span style="color:#000"> </span><span style="color:#979e9c">src</span><span style="color:#000">=</span><span style="color:#3f9a8d">"/js/main.d36b6e09.chunk.js"</span><span style="color:#000">&gt;&lt;/</span><span style="color:#4a88cf">script</span><span style="color:#000">&gt;</span></div>
<div class="m" style="left:0px;width:578.8px;text-align:right;top:480.1px;color:#7a7a7a">16</div>
<div class="m" style="left:0px;width:578.8px;text-align:right;top:503.1px;color:#7a7a7a">17</div>
<div class="m" style="left:600.9px;top:503.1px"><span style="color:#000">&lt;/</span><span style="color:#4a88cf">body</span><span style="color:#000">&gt;</span></div>
<div class="m" style="left:0px;width:578.8px;text-align:right;top:526.2px;color:#7a7a7a">18</div>
<div class="m" style="left:0px;width:578.8px;text-align:right;top:549.2px;color:#7a7a7a">19</div>
<div class="m" style="left:600.9px;top:549.2px"><span style="color:#000">&lt;/</span><span style="color:#4a88cf">html</span><span style="color:#000">&gt;</span></div>
<svg style="position:absolute;left:581px;top:159.5px" width="15" height="15" viewBox="0 0 15 15"><circle cx="7.5" cy="7.5" r="6.8" fill="#e6eef8" stroke="#b3c6de" stroke-width="1.2"/><path d="M4 7.3H11" stroke="#66768c" stroke-width="1.9"/></svg>
<svg style="position:absolute;left:581px;top:205.6px" width="15" height="15" viewBox="0 0 15 15"><circle cx="7.5" cy="7.5" r="6.8" fill="#e6eef8" stroke="#b3c6de" stroke-width="1.2"/><path d="M4 7.3H11" stroke="#66768c" stroke-width="1.9"/></svg>
<svg style="position:absolute;left:581px;top:297.8px" width="15" height="15" viewBox="0 0 15 15"><circle cx="7.5" cy="7.5" r="6.8" fill="#e6eef8" stroke="#b3c6de" stroke-width="1.2"/><path d="M4 7.3H11" stroke="#66768c" stroke-width="1.9"/></svg>
<div class="t" style="left:38.1px;top:99.8px;letter-spacing:0.85px;color:#000;">Debug</div>
<div class="t" style="left:142.8px;top:99.8px;letter-spacing:0.613px;color:#000;">Project Explorer</div>
<div class="t" style="left:361.9px;top:99.8px;letter-spacing:0.467px;color:#000;">Servers</div>
<div class="t" style="left:575.8px;top:100.1px;letter-spacing:0.889px;color:#000;">index.html</div>
<div class="t" style="left:576.3px;top:693.9px;letter-spacing:0.667px;color:#000;">Console</div>
<div class="t" style="left:727.6px;top:693.9px;letter-spacing:0.614px;color:#000;">Problems</div>
<div class="t" style="left:857.9px;top:694.2px;letter-spacing:0.57px;color:#000;">Debug Shell</div>
<div class="t" style="left:1565.8px;top:99.8px;letter-spacing:0px;color:#000;">V</div>
<div class="t" style="left:1661.5px;top:99.8px;letter-spacing:0px;color:#000;">B</div>
<div class="t" style="left:1723.7px;top:99.8px;letter-spacing:0px;color:#000;">E</div>
<div class="t" style="left:1.4px;top:944.2px;letter-spacing:0.833px;color:#3c3c3c;">0 items selected</div>
<div class="t" style="left:540.3px;top:725.1px;letter-spacing:0.752px;color:#2b2b2b">&lt;terminated&gt; Books - BooksApplication [Spring Boot App] /Applications/SpringToolSuite4.app/Contents/Eclipse/plugins/org.eclipse.justj.openjdk.hotspot.jre.full.macosx.x86_64_15.0.1.v20201027-0507/jre/bin/java</div>
<div style="position:absolute;left:1836px;top:726px;width:100px;height:30px;background:#fff"></div>
<svg style="position:absolute;left:293px;top:105.3px" width="17" height="17" viewBox="0 0 17 17"><path d="M1 1H4.6Q5.2 1 5.8 1.6L8.5 4.6L11.2 1.6Q11.8 1 12.4 1H16V4.6Q16 5.2 15.4 5.8L12.4 8.5L15.4 11.2Q16 11.8 16 12.4V16H12.4Q11.8 16 11.2 15.4L8.5 12.4L5.8 15.4Q5.2 16 4.6 16H1V12.4Q1 11.8 1.6 11.2L4.6 8.5L1.6 5.8Q1 5.2 1 4.6Z" fill="#fff" stroke="#111" stroke-width="1.9" stroke-linejoin="round"/></svg>
<svg style="position:absolute;left:678.1px;top:105.4px" width="17" height="17" viewBox="0 0 17 17"><path d="M1 1H4.6Q5.2 1 5.8 1.6L8.5 4.6L11.2 1.6Q11.8 1 12.4 1H16V4.6Q16 5.2 15.4 5.8L12.4 8.5L15.4 11.2Q16 11.8 16 12.4V16H12.4Q11.8 16 11.2 15.4L8.5 12.4L5.8 15.4Q5.2 16 4.6 16H1V12.4Q1 11.8 1.6 11.2L4.6 8.5L1.6 5.8Q1 5.2 1 4.6Z" fill="#fff" stroke="#111" stroke-width="1.9" stroke-linejoin="round"/></svg>
<svg style="position:absolute;left:658.7px;top:700px" width="17" height="17" viewBox="0 0 17 17"><path d="M1 1H4.6Q5.2 1 5.8 1.6L8.5 4.6L11.2 1.6Q11.8 1 12.4 1H16V4.6Q16 5.2 15.4 5.8L12.4 8.5L15.4 11.2Q16 11.8 16 12.4V16H12.4Q11.8 16 11.2 15.4L8.5 12.4L5.8 15.4Q5.2 16 4.6 16H1V12.4Q1 11.8 1.6 11.2L4.6 8.5L1.6 5.8Q1 5.2 1 4.6Z" fill="#fff" stroke="#111" stroke-width="1.9" stroke-linejoin="round"/></svg>
<svg style="position:absolute;left:1592.4px;top:105px" width="17" height="17" viewBox="0 0 17 17"><path d="M1 1H4.6Q5.2 1 5.8 1.6L8.5 4.6L11.2 1.6Q11.8 1 12.4 1H16V4.6Q16 5.2 15.4 5.8L12.4 8.5L15.4 11.2Q16 11.8 16 12.4V16H12.4Q11.8 16 11.2 15.4L8.5 12.4L5.8 15.4Q5.2 16 4.6 16H1V12.4Q1 11.8 1.6 11.2L4.6 8.5L1.6 5.8Q1 5.2 1 4.6Z" fill="#fff" stroke="#111" stroke-width="1.9" stroke-linejoin="round"/></svg>
<svg style="position:absolute;left:459.6px;top:104.1px" width="16" height="6" viewBox="0 0 16 6"><rect x="0.9" y="0.9" width="14.2" height="4.4" fill="none" stroke="#4a4a4a" stroke-width="1.8"/></svg>
<svg style="position:absolute;left:1449px;top:104px" width="16" height="6" viewBox="0 0 16 6"><rect x="0.9" y="0.9" width="14.2" height="4.4" fill="none" stroke="#4a4a4a" stroke-width="1.8"/></svg>
<svg style="position:absolute;left:1772.1px;top:104.2px" width="16" height="6" viewBox="0 0 16 6"><rect x="0.9" y="0.9" width="14.2" height="4.4" fill="none" stroke="#4a4a4a" stroke-width="1.8"/></svg>
<svg style="position:absolute;left:1772px;top:698.2px" width="16" height="6" viewBox="0 0 16 6"><rect x="0.9" y="0.9" width="14.2" height="4.4" fill="none" stroke="#4a4a4a" stroke-width="1.8"/></svg>
<svg style="position:absolute;left:495.9px;top:104.4px" width="16" height="15.5" viewBox="0 0 16 15.5"><rect x="0.9" y="0.9" width="14.2" height="13.6" fill="none" stroke="#4a4a4a" stroke-width="1.8"/><path d="M1 4.2H15" stroke="#4a4a4a" stroke-width="1.6"/></svg>
<svg style="position:absolute;left:1485px;top:104.4px" width="16" height="15.5" viewBox="0 0 16 15.5"><rect x="0.9" y="0.9" width="14.2" height="13.6" fill="none" stroke="#4a4a4a" stroke-width="1.8"/><path d="M1 4.2H15" stroke="#4a4a4a" stroke-width="1.6"/></svg>
<svg style="position:absolute;left:1808px;top:104.2px" width="16" height="15.5" viewBox="0 0 16 15.5"><rect x="0.9" y="0.9" width="14.2" height="13.6" fill="none" stroke="#4a4a4a" stroke-width="1.8"/><path d="M1 4.2H15" stroke="#4a4a4a" stroke-width="1.6"/></svg>
<svg style="position:absolute;left:1808px;top:698px" width="16" height="15.5" viewBox="0 0 16 15.5"><rect x="0.9" y="0.9" width="14.2" height="13.6" fill="none" stroke="#4a4a4a" stroke-width="1.8"/><path d="M1 4.2H15" stroke="#4a4a4a" stroke-width="1.6"/></svg>
<div style="position:absolute;left:0px;top:49.4px;width:5px;height:36.1px;background:#ececec"></div>
<div style="position:absolute;left:0.0px;top:55.2px;width:2.7px;height:2.7px;background:#aaa590;box-shadow:0 1px 0 #fff"></div>
<div style="position:absolute;left:0.0px;top:62.7px;width:2.7px;height:2.7px;background:#aaa590;box-shadow:0 1px 0 #fff"></div>
<div style="position:absolute;left:0.0px;top:70.1px;width:2.7px;height:2.7px;background:#aaa590;box-shadow:0 1px 0 #fff"></div>
<div style="position:absolute;left:0.0px;top:77.4px;width:2.7px;height:2.7px;background:#aaa590;box-shadow:0 1px 0 #fff"></div>
<div style="position:absolute;left:127.3px;top:49.4px;width:8px;height:36.1px;background:#ececec"></div>
<div style="position:absolute;left:128.8px;top:55.2px;width:2.7px;height:2.7px;background:#aaa590;box-shadow:0 1px 0 #fff"></div>
<div style="position:absolute;left:128.8px;top:62.7px;width:2.7px;height:2.7px;background:#aaa590;box-shadow:0 1px 0 #fff"></div>
<div style="position:absolute;left:128.8px;top:70.1px;width:2.7px;height:2.7px;background:#aaa590;box-shadow:0 1px 0 #fff"></div>
<div style="position:absolute;left:128.8px;top:77.4px;width:2.7px;height:2.7px;background:#aaa590;box-shadow:0 1px 0 #fff"></div>
<div style="position:absolute;left:171.3px;top:49.4px;width:8px;height:36.1px;background:#ececec"></div>
<div style="position:absolute;left:172.8px;top:55.2px;width:2.7px;height:2.7px;background:#aaa590;box-shadow:0 1px 0 #fff"></div>
<div style="position:absolute;left:172.8px;top:62.7px;width:2.7px;height:2.7px;background:#aaa590;box-shadow:0 1px 0 #fff"></div>
<div style="position:absolute;left:172.8px;top:70.1px;width:2.7px;height:2.7px;background:#aaa590;box-shadow:0 1px 0 #fff"></div>
<div style="position:absolute;left:172.8px;top:77.4px;width:2.7px;height:2.7px;background:#aaa590;box-shadow:0 1px 0 #fff"></div>
<div style="position:absolute;left:561.5px;top:49.4px;width:8px;height:36.1px;background:#ececec"></div>
<div style="position:absolute;left:563.0px;top:55.2px;width:2.7px;height:2.7px;background:#aaa590;box-shadow:0 1px 0 #fff"></div>
<div style="position:absolute;left:563.0px;top:62.7px;width:2.7px;height:2.7px;background:#aaa590;box-shadow:0 1px 0 #fff"></div>
<div style="position:absolute;left:563.0px;top:70.1px;width:2.7px;height:2.7px;background:#aaa590;box-shadow:0 1px 0 #fff"></div>
<div style="position:absolute;left:563.0px;top:77.4px;width:2.7px;height:2.7px;background:#aaa590;box-shadow:0 1px 0 #fff"></div>
<div style="position:absolute;left:606.1px;top:49.4px;width:8px;height:36.1px;background:#ececec"></div>
<div style="position:absolute;left:607.6px;top:55.2px;width:2.7px;height:2.7px;background:#aaa590;box-shadow:0 1px 0 #fff"></div>
<div style="position:absolute;left:607.6px;top:62.7px;width:2.7px;height:2.7px;background:#aaa590;box-shadow:0 1px 0 #fff"></div>
<div style="position:absolute;left:607.6px;top:70.1px;width:2.7px;height:2.7px;background:#aaa590;box-shadow:0 1px 0 #fff"></div>
<div style="position:absolute;left:607.6px;top:77.4px;width:2.7px;height:2.7px;background:#aaa590;box-shadow:0 1px 0 #fff"></div>
<div style="position:absolute;left:861.4px;top:49.4px;width:8px;height:36.1px;background:#ececec"></div>
<div style="position:absolute;left:862.9px;top:55.2px;width:2.7px;height:2.7px;background:#aaa590;box-shadow:0 1px 0 #fff"></div>
<div style="position:absolute;left:862.9px;top:62.7px;width:2.7px;height:2.7px;background:#aaa590;box-shadow:0 1px 0 #fff"></div>
<div style="position:absolute;left:862.9px;top:70.1px;width:2.7px;height:2.7px;background:#aaa590;box-shadow:0 1px 0 #fff"></div>
<div style="position:absolute;left:862.9px;top:77.4px;width:2.7px;height:2.7px;background:#aaa590;box-shadow:0 1px 0 #fff"></div>
<div style="position:absolute;left:955.1px;top:49.4px;width:8px;height:36.1px;background:#ececec"></div>
<div style="position:absolute;left:956.6px;top:55.2px;width:2.7px;height:2.7px;background:#aaa590;box-shadow:0 1px 0 #fff"></div>
<div style="position:absolute;left:956.6px;top:62.7px;width:2.7px;height:2.7px;background:#aaa590;box-shadow:0 1px 0 #fff"></div>
<div style="position:absolute;left:956.6px;top:70.1px;width:2.7px;height:2.7px;background:#aaa590;box-shadow:0 1px 0 #fff"></div>
<div style="position:absolute;left:956.6px;top:77.4px;width:2.7px;height:2.7px;background:#aaa590;box-shadow:0 1px 0 #fff"></div>
<div style="position:absolute;left:1118px;top:49.4px;width:8px;height:36.1px;background:#ececec"></div>
<div style="position:absolute;left:1119.5px;top:55.2px;width:2.7px;height:2.7px;background:#aaa590;box-shadow:0 1px 0 #fff"></div>
<div style="position:absolute;left:1119.5px;top:62.7px;width:2.7px;height:2.7px;background:#aaa590;box-shadow:0 1px 0 #fff"></div>
<div style="position:absolute;left:1119.5px;top:70.1px;width:2.7px;height:2.7px;background:#aaa590;box-shadow:0 1px 0 #fff"></div>
<div style="position:absolute;left:1119.5px;top:77.4px;width:2.7px;height:2.7px;background:#aaa590;box-shadow:0 1px 0 #fff"></div>
<div style="position:absolute;left:1709.6px;top:55.2px;width:2.6px;height:2.6px;background:#9d9d9d"></div>
<div style="position:absolute;left:1709.6px;top:62.7px;width:2.6px;height:2.6px;background:#9d9d9d"></div>
<div style="position:absolute;left:1709.6px;top:70.1px;width:2.6px;height:2.6px;background:#9d9d9d"></div>
<div style="position:absolute;left:1709.6px;top:77.4px;width:2.6px;height:2.6px;background:#9d9d9d"></div>
<div style="position:absolute;left:221.3px;top:49.4px;width:1px;height:36.1px;background:#dadada"></div>
<div style="position:absolute;left:484.7px;top:49.4px;width:1px;height:36.1px;background:#dadada"></div>
<div style="position:absolute;left:1004.9px;top:49.4px;width:1px;height:36.1px;background:#dadada"></div>
<div style="position:absolute;left:1401.7px;top:49.4px;width:1px;height:36.1px;background:#dadada"></div>
<div style="position:absolute;left:1757.8px;top:49.4px;width:1px;height:36.1px;background:#dadada"></div>
<div style="position:absolute;left:963.3px;top:49.4px;width:36.2px;height:36.0px;background:#e9e9e9;border:1.5px solid #c2c2c2"></div>
<div style="position:absolute;left:1798.3px;top:49.4px;width:35.4px;height:36.0px;background:#e9e9e9;border:1.5px solid #c2c2c2"></div>
<svg style="position:absolute;left:11.6px;top:56px" width="25" height="23" viewBox="0 0 25 23"><rect x="0.8" y="3.8" width="22" height="18.4" fill="#f2f6fc" stroke="#857650" stroke-width="1.4"/><rect x="1" y="3.6" width="15" height="4.6" fill="#5c8fd6"/><path d="M1 5.5H15" stroke="#8ab4ea" stroke-width="1"/><path d="M3 21.8 Q16.25 20 19 9" stroke="#f6e2a0" stroke-width="2" fill="none"/><path d="M19 0.5L24.2 5.6L19 10.7L13.8 5.6Z" fill="#d9a84a" stroke="#a8782a" stroke-width="1.3" stroke-linejoin="round"/><path d="M19 2Q19.7 4.9 22.5 5.6Q19.7 6.3 19 9.2Q18.3 6.3 15.5 5.6Q18.3 4.9 19 2Z" fill="#fff6d0"/></svg>
<svg style="position:absolute;left:41.5px;top:65.8px" width="8" height="6.2" viewBox="0 0 8 6.2"><path d="M0 0H8L4.0 6.2Z" fill="#000"/></svg>
<svg style="position:absolute;left:61.3px;top:56.5px" width="24" height="24" viewBox="0 0 24 24"><path d="M1 1H20L23 4V23H1Z" fill="#e6e6e6" stroke="#d2d2d2" stroke-width="1.3"/><rect x="5" y="1.5" width="13" height="7" fill="#f4f4f4" stroke="#d2d2d2"/><rect x="7" y="14" width="10" height="9" fill="#f4f4f4" stroke="#d2d2d2"/></svg>
<svg style="position:absolute;left:97.4px;top:56px" width="24" height="24.5" viewBox="0 0 24 24.5"><g transform="scale(0.8)"><path d="M1 1H20L23 4V23H1Z" fill="#e6e6e6" stroke="#d2d2d2" stroke-width="1.3"/><rect x="5" y="1.5" width="13" height="7" fill="#f4f4f4" stroke="#d2d2d2"/><rect x="7" y="14" width="10" height="9" fill="#f4f4f4" stroke="#d2d2d2"/></g><g transform="translate(5,5) scale(0.8)"><path d="M1 1H20L23 4V23H1Z" fill="#e6e6e6" stroke="#d2d2d2" stroke-width="1.3"/><rect x="5" y="1.5" width="13" height="7" fill="#f4f4f4" stroke="#d2d2d2"/><rect x="7" y="14" width="10" height="9" fill="#f4f4f4" stroke="#d2d2d2"/></g></svg>
<svg style="position:absolute;left:143px;top:56px" width="22" height="21.5" viewBox="0 0 22 21.5"><rect x="1.3" y="1.3" width="19.4" height="14.6" rx="2" fill="#fafcff" stroke="#3b6bb5" stroke-width="2.6"/><rect x="3.3" y="3.3" width="15.4" height="10.6" fill="none" stroke="#7d8ca8" stroke-width="0.9"/><path d="M5 6.5H11M5 9.7H15.5" stroke="#2f4f9a" stroke-width="1.4"/><path d="M2 20.2H20" stroke="#3b6bb5" stroke-width="2.2"/><path d="M11 16V19.3" stroke="#3b6bb5" stroke-width="5"/></svg>
<svg style="position:absolute;left:188.6px;top:59px" width="19.5" height="18.5" viewBox="0 0 19.5 18.5"><circle cx="10" cy="9.5" r="5.8" fill="#c9d6e8" stroke="#3a66a8" stroke-width="2"/><path d="M1 1L18 17.5" stroke="#7b7b7b" stroke-width="2"/></svg>
<svg style="position:absolute;left:232px;top:59.2px" width="25" height="16.5" viewBox="0 0 25 16.5"><rect x="0.7" y="0.7" width="6" height="15" fill="#e6e6e6" stroke="#d2d2d2"/><path d="M10 0.7L24.5 8.2L10 15.8Z" fill="#e6e6e6" stroke="#d2d2d2"/></svg>
<svg style="position:absolute;left:271.9px;top:59.2px" width="18" height="17" viewBox="0 0 18 17"><rect x="0.7" y="0.7" width="6" height="15.6" fill="#e6e6e6" stroke="#d2d2d2"/><rect x="11" y="0.7" width="6" height="15.6" fill="#e6e6e6" stroke="#d2d2d2"/></svg>
<svg style="position:absolute;left:308.2px;top:59.7px" width="17.5" height="17.5" viewBox="0 0 17.5 17.5"><rect x="0.7" y="0.7" width="16" height="16" rx="2" fill="#e6e6e6" stroke="#d2d2d2" stroke-width="1.4"/><rect x="3" y="3" width="11.5" height="11.5" fill="#d9d9d9"/></svg>
<svg style="position:absolute;left:341px;top:58.2px" width="23" height="18.5" viewBox="0 0 23 18.5"><circle cx="4" cy="14.5" r="3.3" fill="#e6e6e6" stroke="#d2d2d2"/><circle cx="19" cy="4" r="3.3" fill="#e6e6e6" stroke="#d2d2d2"/><path d="M4 11L4.5 1.5L11 9L10 11L19 18V7" fill="none" stroke="#d2d2d2" stroke-width="1.3"/></svg>
<svg style="position:absolute;left:376.9px;top:58.5px" width="25" height="18.5" viewBox="0 0 25 18.5"><path d="M1 2H9V12" fill="none" stroke="#d2d2d2" stroke-width="3"/><path d="M4 11H14L9 16Z" fill="#e6e6e6" stroke="#d2d2d2"/><rect x="0" y="16" width="6" height="2.5" fill="#d2d2d2"/><rect x="18.5" y="16" width="6" height="2.5" fill="#d2d2d2"/></svg>
<svg style="position:absolute;left:413.5px;top:58.5px" width="24.5" height="18.5" viewBox="0 0 24.5 18.5"><path d="M3 9Q3 2 10 2Q18 2 18 10" fill="none" stroke="#d2d2d2" stroke-width="3"/><path d="M13 9H23L18 15Z" fill="#e6e6e6" stroke="#d2d2d2"/><rect x="7" y="16" width="6" height="2.5" fill="#d2d2d2"/></svg>
<svg style="position:absolute;left:449.2px;top:58.5px" width="25.3" height="18.5" viewBox="0 0 25.3 18.5"><path d="M12 16V6H20" fill="none" stroke="#d2d2d2" stroke-width="3"/><path d="M18 1L24 6L18 11Z" fill="#e6e6e6" stroke="#d2d2d2"/><rect x="0" y="16" width="6" height="2.5" fill="#d2d2d2"/><rect x="19" y="16" width="6" height="2.5" fill="#d2d2d2"/></svg>
<svg style="position:absolute;left:495px;top:55px" width="24.6" height="23" viewBox="0 0 24.6 23"><path d="M1 2H20M1 7H20M1 12H14M1 17H12" stroke="#d2d2d2" stroke-width="2.5"/><path d="M12 17Q12 12 19 12V9L24 15L19 21V18Q15 18 14 21" fill="#e6e6e6" stroke="#d2d2d2"/></svg>
<svg style="position:absolute;left:529.8px;top:55.3px" width="27" height="23.6" viewBox="0 0 27 23.6"><path d="M1 6H18V1.5L25.5 7.5L18 13.5V9.5H11V16H15L9.5 21.5L4 16H8V9.5H1Z" fill="#f7dc8e" stroke="#b88a2e" stroke-width="1.4" stroke-linejoin="round"/><rect x="0" y="21" width="6" height="2.6" fill="#3a5a9a"/><rect x="19" y="21" width="7" height="2.6" fill="#3a5a9a"/></svg>
<svg style="position:absolute;left:576.9px;top:56.6px" width="22.6" height="21.2" viewBox="0 0 22.6 21.2"><path d="M5.8 0.5H16.8L22.3 10.6L16.8 20.7H5.8L0.3 10.6Z" fill="#2f8a2a" stroke="#276f22"/><path d="M7.5 7.5A5 5 0 1 0 15 7.5" fill="none" stroke="#fff" stroke-width="2"/><path d="M11.3 4.5V10.5" stroke="#fff" stroke-width="2"/></svg>
<svg style="position:absolute;left:620.7px;top:56px" width="25" height="24" viewBox="0 0 25 24"><g stroke="#3b7a48" stroke-width="1.7" fill="none" stroke-linecap="round"><path d="M7.6 0.8V5.8M14.2 2.6Q14 5 12.5 6.3M0.4 7.8H5.7M15.7 8.3Q19 7.5 23 9.3M1.9 14.3Q4 13 6.2 12.3M19.7 13.8Q22 14.3 24 16.3M7.2 17.3Q7.5 20 9.2 23.2M14.2 20.3Q15 22.5 16.2 24.2"/></g><defs><linearGradient id="bgr" x1="0" y1="0" x2="1" y2="1"><stop offset="0.2" stop-color="#eceee6"/><stop offset="0.55" stop-color="#b8d6a0"/><stop offset="1" stop-color="#4e9a3e"/></linearGradient></defs><circle cx="7.8" cy="7.9" r="2.6" fill="#7ab878" stroke="#2e5fa6" stroke-width="1.3"/><ellipse cx="13.6" cy="13.6" rx="7.3" ry="5.6" transform="rotate(45 13.6 13.6)" fill="url(#bgr)" stroke="#2e5fa6" stroke-width="1.7"/><path d="M12 11Q15 14 17 18" stroke="#6aaa58" stroke-width="1.2" fill="none"/></svg>
<svg style="position:absolute;left:651.2px;top:65.8px" width="8" height="6.2" viewBox="0 0 8 6.2"><path d="M0 0H8L4.0 6.2Z" fill="#000"/></svg>
<svg style="position:absolute;left:670.2px;top:56px" width="23.5" height="23" viewBox="0 0 23.5 23"><defs><linearGradient id="pg" x1="0" y1="0" x2="0" y2="1"><stop offset="0" stop-color="#6cc060"/><stop offset="1" stop-color="#2e8a2a"/></linearGradient></defs><circle cx="11.75" cy="11.5" r="11" fill="url(#pg)" stroke="#2a7a2a"/><path d="M8.5 5.5L17.5 11.5L8.5 17.5Z" fill="#fff"/></svg>
<svg style="position:absolute;left:700.2px;top:65.8px" width="8" height="6.2" viewBox="0 0 8 6.2"><path d="M0 0H8L4.0 6.2Z" fill="#000"/></svg>
<svg style="position:absolute;left:717.6px;top:53.8px" width="27.3" height="25" viewBox="0 0 27.3 25"><circle cx="9.5" cy="9.5" r="9" fill="#4faa45" stroke="#2a7a2a"/><path d="M6.5 4.5L14 9.5L6.5 14.5Z" fill="#fff"/><rect x="11" y="15" width="16" height="9.5" fill="#d93a3a" stroke="#a02020"/><path d="M16 15V12.5H22V15M11 19H27" stroke="#a02020" stroke-width="1.2" fill="none"/></svg>
<svg style="position:absolute;left:749.9px;top:65.8px" width="8" height="6.2" viewBox="0 0 8 6.2"><path d="M0 0H8L4.0 6.2Z" fill="#000"/></svg>
<svg style="position:absolute;left:772.1px;top:59.2px" width="18.5" height="18.6" viewBox="0 0 18.5 18.6"><rect x="0.7" y="0.7" width="17" height="17" fill="#e6e6e6" stroke="#d2d2d2" stroke-width="1.3"/><rect x="3.5" y="3.5" width="11.5" height="11.5" fill="#dcdcdc"/></svg>
<svg style="position:absolute;left:799.3px;top:66px" width="7.2" height="5.6" viewBox="0 0 7.2 5.6"><path d="M0 0H7.2L3.6 5.6Z" fill="#c8c8c8"/></svg>
<svg style="position:absolute;left:819.6px;top:53.8px" width="24" height="24" viewBox="0 0 24 24"><rect x="0.7" y="0.7" width="14" height="14" fill="#d83a3a" stroke="#9a2020" stroke-width="1.2"/><path d="M12 11L23.5 17.5L12 23.5Z" fill="#4fb845" stroke="#2f7f2a"/></svg>
<svg style="position:absolute;left:848.4px;top:65.8px" width="8" height="6.2" viewBox="0 0 8 6.2"><path d="M0 0H8L4.0 6.2Z" fill="#000"/></svg>
<svg style="position:absolute;left:873.4px;top:56px" width="27.7" height="23" viewBox="0 0 27.7 23"><path d="M1 7H10L12 9H18V12" fill="#f6e3a8" stroke="#b57c2e" stroke-width="1.3"/><path d="M1 7V22H20L27 12H7L1 22" fill="#f7e2a4" stroke="#b57c2e" stroke-width="1.3" stroke-linejoin="round"/><circle cx="13" cy="6.5" r="5.5" fill="#4a64b8" stroke="#2d3f8a"/><circle cx="20" cy="9" r="5.5" fill="#3f9a45" stroke="#2a6d2a"/></svg>
<svg style="position:absolute;left:909.4px;top:56px" width="28.3" height="24" viewBox="0 0 28.3 24"><path d="M2 22L10 14L16 20Z" fill="#fbeec4"/><path d="M6 13L20 1.5Q26 1 27 6L15 19Z" fill="#f4d680" stroke="#b99042" stroke-width="1.2"/><path d="M8 11L17 20L13 23L5 15Z" fill="#9a9a9a" stroke="#6a6a6a"/></svg>
<svg style="position:absolute;left:942px;top:65.8px" width="8" height="6.2" viewBox="0 0 8 6.2"><path d="M0 0H8L4.0 6.2Z" fill="#000"/></svg>
<svg style="position:absolute;left:968.2px;top:52.5px" width="26.7" height="31" viewBox="0 0 26.7 31"><path d="M12 16L22 2L25 3V14L16 22Z" fill="#8d8c80" stroke="#6a695c"/><path d="M5 22L12 15L17 21L9 27Z" fill="#f3d27a" stroke="#c9a24a"/><path d="M0 28.5H9" stroke="#f0c040" stroke-width="1.5"/></svg>
<svg style="position:absolute;left:1015.8px;top:54.9px" width="24.5" height="22" viewBox="0 0 24.5 22"><path d="M1 1H14V4H4V20H14V21H1Z" fill="#e6e6e6" stroke="#d2d2d2"/><path d="M6 6H16M6 10H13M6 14H11" stroke="#d2d2d2" stroke-width="1.6"/><path d="M20 5V14H14V11L10 15.5L14 20V17H23V5Z" fill="#e6e6e6" stroke="#d2d2d2"/></svg>
<svg style="position:absolute;left:1052.6px;top:55.5px" width="22" height="21.5" viewBox="0 0 22 21.5"><rect x="0.7" y="0.7" width="20.6" height="20.1" fill="#f6f6f6" stroke="#d2d2d2" stroke-width="1.3"/><path d="M5 5H17M5 9H17M5 13H17M5 17H17" stroke="#d2d2d2" stroke-width="1.6"/><path d="M7.5 4V18" stroke="#d2d2d2" stroke-width="1.3"/></svg>
<svg style="position:absolute;left:1092.9px;top:59px" width="14.5" height="18" viewBox="0 0 14.5 18"><path d="M6 1H14M8 1V17M12 1V17M8 9Q1 9 1 5Q1 1 6 1" fill="#e6e6e6" stroke="#d2d2d2" stroke-width="2"/></svg>
<svg style="position:absolute;left:1133px;top:54.5px" width="23" height="23.5" viewBox="0 0 23 23.5"><rect x="4" y="3" width="18" height="19" fill="#f6f6f6" stroke="#d2d2d2"/><path d="M10 8H19M10 12H19M10 16H19" stroke="#d2d2d2" stroke-width="1.5"/><path d="M4 0V9H0L7 17L14 9H10V0" fill="#e6e6e6" stroke="#d2d2d2"/></svg>
<svg style="position:absolute;left:1162.9px;top:66px" width="7.2" height="5.6" viewBox="0 0 7.2 5.6"><path d="M0 0H7.2L3.6 5.6Z" fill="#c8c8c8"/></svg>
<svg style="position:absolute;left:1182px;top:54.5px" width="23" height="23.5" viewBox="0 0 23 23.5"><rect x="4" y="1" width="18" height="19" fill="#f6f6f6" stroke="#d2d2d2"/><path d="M10 5H19M10 9H19M10 13H19" stroke="#d2d2d2" stroke-width="1.5"/><path d="M4 23V14H0L7 6L14 14H10V23" fill="#e6e6e6" stroke="#d2d2d2"/></svg>
<svg style="position:absolute;left:1211.9px;top:66px" width="7.2" height="5.6" viewBox="0 0 7.2 5.6"><path d="M0 0H7.2L3.6 5.6Z" fill="#c8c8c8"/></svg>
<svg style="position:absolute;left:1229.6px;top:57.6px" width="27.2" height="20" viewBox="0 0 27.2 20"><g transform="translate(0,-1.5)"><path d="M1.5 11L11 2.5V7.5H25.5V14.5H11V19.5Z" fill="#f7e3a8" stroke="#b4832e" stroke-width="1.5" stroke-linejoin="round"/></g><path d="M4 0V8M0.5 2L7.5 6M0.5 6L7.5 2" stroke="#2c4f9a" stroke-width="1.6"/></svg>
<svg style="position:absolute;left:1266.4px;top:57.6px" width="27.2" height="20" viewBox="0 0 27.2 20"><g transform="translate(0,-1.5)"><path d="M25.5 11L16 2.5V7.5H1.5V14.5H16V19.5Z" fill="#f7e3a8" stroke="#b4832e" stroke-width="1.5" stroke-linejoin="round"/></g><path d="M23 0V8M19.5 2L26.5 6M19.5 6L26.5 2" stroke="#2c4f9a" stroke-width="1.6"/></svg>
<svg style="position:absolute;left:1303.7px;top:57.6px" width="24" height="20" viewBox="0 0 24 20"><g transform="translate(-1,-1.5) scale(0.93,1)"><path d="M1.5 11L11 2.5V7.5H25.5V14.5H11V19.5Z" fill="#f7e3a8" stroke="#b4832e" stroke-width="1.5" stroke-linejoin="round"/></g></svg>
<svg style="position:absolute;left:1333.6px;top:65.8px" width="8" height="6.2" viewBox="0 0 8 6.2"><path d="M0 0H8L4.0 6.2Z" fill="#000"/></svg>
<svg style="position:absolute;left:1353.5px;top:57.6px" width="23.3" height="20" viewBox="0 0 23.3 20"><g transform="translate(-1,-1.5) scale(0.93,1)"><path d="M25.5 11L16 2.5V7.5H1.5V14.5H16V19.5Z" fill="#f4f4f4" stroke="#dddddd" stroke-width="1.5" stroke-linejoin="round"/></g></svg>
<svg style="position:absolute;left:1383.5px;top:66px" width="7.2" height="5.6" viewBox="0 0 7.2 5.6"><path d="M0 0H7.2L3.6 5.6Z" fill="#c8c8c8"/></svg>
<svg style="position:absolute;left:1410.7px;top:56.3px" width="27.2" height="23" viewBox="0 0 27.2 23"><rect x="0.8" y="5" width="21" height="17" fill="#eef3fb" stroke="#8d7a4e" stroke-width="1.4"/><rect x="0.8" y="5" width="21" height="3.2" fill="#5a8fd6"/><path d="M13 14L18.5 8.5" stroke="#333" stroke-width="1.4"/><path d="M17 3Q21 -1 25 2.5Q27 6 23 10L19 12L14.5 7.5Z" fill="#3d9a3d" stroke="#2a6a2a"/></svg>
<svg style="position:absolute;left:1660px;top:56px" width="24" height="24" viewBox="0 0 24 24"><circle cx="9" cy="9" r="7.2" fill="none" stroke="#6e6e6e" stroke-width="3"/><path d="M14 14L22.5 22.5" stroke="#6e6e6e" stroke-width="3.2"/></svg>
<svg style="position:absolute;left:1722px;top:56px" width="24" height="23" viewBox="0 0 24 23"><rect x="0.8" y="3.5" width="19" height="18.7" rx="1" fill="#dfeaf8" stroke="#756a4c" stroke-width="1.4"/><rect x="0.8" y="3.5" width="19" height="3.5" fill="#5a8fd6"/><path d="M7 7V22M1 14H20" stroke="#756a4c" stroke-width="1.3"/><path d="M18.5 -0.5L24 5L18.5 10.5L13 5Z" fill="#d9a84a" stroke="#a8782a" stroke-width="1.3" stroke-linejoin="round"/><path d="M18.5 1Q19.2 4.3 22 5Q19.2 5.7 18.5 9Q17.8 5.7 15 5Q17.8 4.3 18.5 1Z" fill="#fff6d0"/></svg>
<svg style="position:absolute;left:1766.7px;top:54.3px" width="25.1" height="26.2" viewBox="0 0 25.1 26.2"><path d="M3 6H15M3 11H15M5.5 1V14M12 1V14" stroke="#7a4a2a" stroke-width="2"/><rect x="6" y="2.5" width="5" height="3" fill="#eacf98"/><rect x="6" y="7" width="5" height="3" fill="#eacf98"/><path d="M23 1V9Q23 12 19 12" stroke="#2e5fae" stroke-width="2.5" fill="none"/><circle cx="15" cy="19" r="6" fill="#3d4f9a"/><circle cx="7" cy="15" r="6.3" fill="#3f9a45" stroke="#2a6a2a"/></svg>
<svg style="position:absolute;left:1804.3px;top:56.5px" width="25" height="24" viewBox="0 0 25 24"><g stroke="#3b7a48" stroke-width="1.7" fill="none" stroke-linecap="round"><path d="M7.6 0.8V5.8M14.2 2.6Q14 5 12.5 6.3M0.4 7.8H5.7M15.7 8.3Q19 7.5 23 9.3M1.9 14.3Q4 13 6.2 12.3M19.7 13.8Q22 14.3 24 16.3M7.2 17.3Q7.5 20 9.2 23.2M14.2 20.3Q15 22.5 16.2 24.2"/></g><defs><linearGradient id="bgr" x1="0" y1="0" x2="1" y2="1"><stop offset="0.2" stop-color="#eceee6"/><stop offset="0.55" stop-color="#b8d6a0"/><stop offset="1" stop-color="#4e9a3e"/></linearGradient></defs><circle cx="7.8" cy="7.9" r="2.6" fill="#7ab878" stroke="#2e5fa6" stroke-width="1.3"/><ellipse cx="13.6" cy="13.6" rx="7.3" ry="5.6" transform="rotate(45 13.6 13.6)" fill="url(#bgr)" stroke="#2e5fa6" stroke-width="1.7"/><path d="M12 11Q15 14 17 18" stroke="#6aaa58" stroke-width="1.2" fill="none"/></svg>
<svg style="position:absolute;left:6.3px;top:101.7px" width="25.2" height="25.1" viewBox="0 0 25.2 25.1"><g stroke="#3b7a48" stroke-width="1.7" fill="none" stroke-linecap="round"><path d="M7.6 0.8V5.8M14.2 2.6Q14 5 12.5 6.3M0.4 7.8H5.7M15.7 8.3Q19 7.5 23 9.3M1.9 14.3Q4 13 6.2 12.3M19.7 13.8Q22 14.3 24 16.3M7.2 17.3Q7.5 20 9.2 23.2M14.2 20.3Q15 22.5 16.2 24.2"/></g><defs><linearGradient id="bgr" x1="0" y1="0" x2="1" y2="1"><stop offset="0.2" stop-color="#eceee6"/><stop offset="0.55" stop-color="#b8d6a0"/><stop offset="1" stop-color="#4e9a3e"/></linearGradient></defs><circle cx="7.8" cy="7.9" r="2.6" fill="#7ab878" stroke="#2e5fa6" stroke-width="1.3"/><ellipse cx="13.6" cy="13.6" rx="7.3" ry="5.6" transform="rotate(45 13.6 13.6)" fill="url(#bgr)" stroke="#2e5fa6" stroke-width="1.7"/><path d="M12 11Q15 14 17 18" stroke="#6aaa58" stroke-width="1.2" fill="none"/></svg>
<svg style="position:absolute;left:110px;top:100.8px" width="25" height="24.5" viewBox="0 0 25 24.5"><path d="M0.8 0H10.5L15.6 5.2V18.6H0.8Z" fill="#f6f9fd" stroke="#b29a5c" stroke-width="1.3"/><path d="M10.5 0V5.2H15.6" fill="#e8d08a" stroke="#b29a5c" stroke-width="1"/><path d="M3 6.5H7.8M3 10H8M3 13.5H8M3 17H8" stroke="#5a8ad0" stroke-width="1.3"/><path d="M7.8 23.2V10.5Q7.8 8.4 9.8 8.4H13.4Q15.4 8.4 15.6 11.2H23.2Q24.6 11.2 24.6 12.6V23.2Z" fill="#f5df98" stroke="#a8702a" stroke-width="1.4" stroke-linejoin="round"/><path d="M8.8 13.5H23.6" stroke="#fbefc4" stroke-width="1.5"/><path d="M8.2 23.2H24.2" stroke="#7a4a20" stroke-width="1"/></svg>
<svg style="position:absolute;left:332.6px;top:103.2px" width="21.6" height="18.6" viewBox="0 0 21.6 18.6"><path d="M4 0V18.6M10.8 0V18.6M17.6 0V18.6" stroke="#2e5fae" stroke-width="1.3"/><rect x="0.5" y="9" width="7" height="4" rx="1.5" fill="#9cc84a" stroke="#5a8a2a"/><rect x="7.3" y="2" width="7" height="4.5" rx="1.5" fill="#f0b040" stroke="#b07a20"/><rect x="14.1" y="11" width="7" height="4" rx="1.5" fill="#7ab8e0" stroke="#3a7ab0"/></svg>
<svg style="position:absolute;left:545px;top:102.2px" width="25" height="22.5" viewBox="0 0 25 22.5"><path d="M0.5 0.5 H13 L18.5 6 V22.5 H0.5Z" fill="#f0f4fa" stroke="#b8a97c"/><path d="M13 0.5 V6 H18.5" fill="#e8d29a" stroke="#b8a97c"/><path d="M0.5 17 V22.5 H18.5" stroke="#7089b8" stroke-width="1.4" fill="none"/><text x="0" y="19.5" font-size="6.5" font-weight="bold" fill="#e08a3a" font-family="Liberation Sans">&lt;HTML&gt;</text></svg>
<svg style="position:absolute;left:390.1px;top:141.5px" width="21.6" height="21" viewBox="0 0 21.6 21"><rect x="0.7" y="0.7" width="15.5" height="15" fill="#e6eef8" stroke="#8aa4c8" stroke-width="1.2"/><rect x="4.5" y="4.5" width="16.4" height="15.8" fill="#f0f5fb" stroke="#6a8ab8" stroke-width="1.3"/><path d="M7.5 12.5H18" stroke="#2a4f8a" stroke-width="1.8"/></svg>
<svg style="position:absolute;left:423px;top:138px" width="26.4" height="26.3" viewBox="0 0 26.4 26.3"><path d="M1.5 7L8.5 1V4.5H17.5V9.5H8.5V13Z" fill="#f7e3a8" stroke="#b4832e" stroke-width="1.3" stroke-linejoin="round"/><path d="M25 19.5L18 13.5V17H9V22H18V25.5Z" fill="#f7e3a8" stroke="#b4832e" stroke-width="1.3" stroke-linejoin="round"/></svg>
<svg style="position:absolute;left:460.8px;top:140.3px" width="21.6" height="24" viewBox="0 0 21.6 24"><path d="M0.7 0.7H20.9V4L13 11.5V20L8.5 23.3V11.5L0.7 4Z" fill="#dbe7f5" stroke="#8aa4c8" stroke-width="1.2" stroke-linejoin="round"/></svg>
<svg style="position:absolute;left:505.1px;top:140.3px" width="8" height="23" viewBox="0 0 8 23"><circle cx="4" cy="3.8" r="3" fill="none" stroke="#333" stroke-width="1.3"/><circle cx="4" cy="11.6" r="3" fill="none" stroke="#333" stroke-width="1.3"/><circle cx="4" cy="19.4" r="3" fill="none" stroke="#333" stroke-width="1.3"/></svg>
<div style="position:absolute;left:1532px;top:100px;font-size:16.5px;line-height:24px;color:#3f7fd0;white-space:pre;letter-spacing:-0.3px">(x)=</div>
<svg style="position:absolute;left:1630px;top:104.2px" width="23.5" height="19.5" viewBox="0 0 23.5 19.5"><circle cx="6" cy="6" r="5.3" fill="#5b8fd6" stroke="#3a6ab0"/><circle cx="17" cy="13.3" r="5.3" fill="#5b8fd6" stroke="#3a6ab0"/></svg>
<svg style="position:absolute;left:1690.7px;top:101.5px" width="27" height="22.5" viewBox="0 0 27 22.5"><circle cx="6" cy="11" r="4.3" fill="none" stroke="#3a7ad0" stroke-width="1.6"/><circle cx="16" cy="11" r="4.3" fill="none" stroke="#3a7ad0" stroke-width="1.6"/><path d="M1.5 9Q2 2 8 1M20 9Q21 2 26 2" fill="none" stroke="#3a7ad0" stroke-width="1.5"/><path d="M10 17L13 20.5M13 17L10 20.5M15 17.5H20M15 20.5H20" stroke="#3a7ad0" stroke-width="1.3"/></svg>
<div style="position:absolute;left:1731px;top:133.5px;width:35.7px;height:35.7px;background:#e9e9e9;border:1.5px solid #c2c2c2"></div>
<svg style="position:absolute;left:1699.5px;top:139.9px" width="26.2" height="24.7" viewBox="0 0 26.2 24.7"><path d="M3 8H25V24H3Z" fill="#f4ecd8" stroke="#b8a070" stroke-width="1.2"/><path d="M19 24L25 18" stroke="#e0c070" stroke-width="2"/><path d="M7 19H10M12 19H15M17 19H20" stroke="#3a5fa0" stroke-width="1.8"/><path d="M15 1Q7 2 5 14Q4 18 1 18" stroke="#2e5aa8" stroke-width="1.8" fill="none"/><path d="M4 7L14 15M14 6L5 16" stroke="#2e5aa8" stroke-width="1.6"/></svg>
<svg style="position:absolute;left:1736px;top:141.5px" width="26" height="22" viewBox="0 0 26 22"><path d="M1 10H8V7L13 11.5L8 16V13H1Z" fill="#f7dc8e" stroke="#c09040" stroke-width="1.1"/><path d="M17 3V20H22" stroke="#3a6ab0" stroke-width="1.6" fill="none"/><path d="M14 6L17 1L20 6Z" fill="#3a6ab0"/><rect x="20.5" y="9" width="4.5" height="4.5" fill="#e05a5a"/><rect x="20.5" y="16" width="4.5" height="4.5" fill="#e05a5a"/><path d="M21 3H25" stroke="#3a6ab0" stroke-width="1.2"/></svg>
<svg style="position:absolute;left:1775.4px;top:141px" width="21.1" height="22" viewBox="0 0 21.1 22"><rect x="0.7" y="0.7" width="15.5" height="15" fill="#f5f5f5" stroke="#dcdcdc"/><rect x="4.5" y="4.5" width="16" height="16.5" fill="#f8f8f8" stroke="#d8d8d8" stroke-width="1.2"/><path d="M7.5 12.5H18" stroke="#d6d6d6" stroke-width="1.6"/></svg>
<svg style="position:absolute;left:1817.5px;top:140px" width="8" height="23" viewBox="0 0 8 23"><circle cx="4" cy="3.8" r="3" fill="none" stroke="#333" stroke-width="1.3"/><circle cx="4" cy="11.6" r="3" fill="none" stroke="#333" stroke-width="1.3"/><circle cx="4" cy="19.4" r="3" fill="none" stroke="#333" stroke-width="1.3"/></svg>
<svg style="position:absolute;left:546.8px;top:695.7px" width="21.3" height="22" viewBox="0 0 21.3 22"><rect x="1.3" y="1.3" width="18.7" height="14.6" rx="2" fill="#fafcff" stroke="#3b6bb5" stroke-width="2.6"/><rect x="3.3" y="3.3" width="14.7" height="10.6" fill="none" stroke="#7d8ca8" stroke-width="0.9"/><path d="M5 6.2H10M5 9.2H14.5" stroke="#2f4f9a" stroke-width="1.3"/><path d="M1.8 20.6H19.5" stroke="#3b6bb5" stroke-width="2.2"/><path d="M10.65 16V19.5" stroke="#3b6bb5" stroke-width="5"/></svg>
<svg style="position:absolute;left:694.9px;top:694.4px" width="23.8" height="24.8" viewBox="0 0 23.8 24.8"><path d="M0.7 0.7H17L23 6V24H0.7Z" fill="#dfe9f5" stroke="#8aa0c0" stroke-width="1.2"/><path d="M17 0.7L14 24" stroke="#8aa0c0"/><circle cx="7" cy="6.5" r="4" fill="#e04040"/><path d="M3 22V17L7 13L11 17V22Z" fill="#f0b030"/><rect x="0.7" y="12" width="13" height="1.2" fill="#8aa0c0"/></svg>
<svg style="position:absolute;left:829.9px;top:696.1px" width="18.3" height="24.4" viewBox="0 0 18.3 24.4"><path d="M0.7 2.5H17.6V18L12 23.7H0.7Z" fill="#f6f8fc" stroke="#b09a60" stroke-width="1.3"/><path d="M2 1V4M5 1V4M8 1V4M11 1V4M14 1V4" stroke="#3a5fa0" stroke-width="1.2"/><path d="M10.5 8V16Q10.5 19 7 19Q5 19 4.5 17" stroke="#2e5aa8" stroke-width="2.6" fill="none"/><path d="M12 23.7L17.6 18V23.7Z" fill="#6fbf5a"/></svg>
<svg style="position:absolute;left:1178.6px;top:694.8px" width="23.6" height="22.5" viewBox="0 0 23.6 22.5"><path d="M13 3Q20 3 21 10L23 8M11 19Q4 19 3 12L1 14" stroke="#dcdcdc" stroke-width="3" fill="none"/><path d="M14 0L18 4L13 6Z" fill="#dcdcdc"/><path d="M10 22L6 18L11 16Z" fill="#dcdcdc"/></svg>
<svg style="position:absolute;left:1216.9px;top:695.4px" width="21.5" height="21" viewBox="0 0 21.5 21"><path d="M3 3L18 18M18 3L3 18" stroke="#4a4a4a" stroke-width="6.5" stroke-linecap="round"/><path d="M3 3L18 18M18 3L3 18" stroke="#6a6a6a" stroke-width="4" stroke-linecap="round"/></svg>
<svg style="position:absolute;left:1251.2px;top:692.8px" width="25.5" height="26.5" viewBox="0 0 25.5 26.5"><g transform="scale(0.85)"><path d="M3 3L18 18M18 3L3 18" stroke="#5a5a5a" stroke-width="6.5" stroke-linecap="round"/><path d="M3 3L18 18M18 3L3 18" stroke="#d0d0d0" stroke-width="4" stroke-linecap="round"/></g><g transform="translate(7,8) scale(0.85)"><path d="M3 3L18 18M18 3L3 18" stroke="#4a4a4a" stroke-width="6.5" stroke-linecap="round"/><path d="M3 3L18 18M18 3L3 18" stroke="#6a6a6a" stroke-width="4" stroke-linecap="round"/></g></svg>
<svg style="position:absolute;left:1291px;top:698.1px" width="18" height="17.7" viewBox="0 0 18 17.7"><rect x="0.8" y="0.8" width="16.4" height="16.1" rx="2" fill="#e6e6e6" stroke="#d8d8d8" stroke-width="1.4"/><rect x="3.5" y="3.5" width="11" height="10.7" fill="#dddddd"/></svg>
<div style="position:absolute;left:1322.7px;top:688px;width:1px;height:36.2px;background:#dadada"></div>
<svg style="position:absolute;left:1333.5px;top:693.5px" width="25" height="25" viewBox="0 0 25 25"><path d="M0.7 0.7H12L16 4.7V20H0.7Z" fill="#f4f4f4" stroke="#e0e0e0"/><path d="M3 6H12M3 9.5H12M3 13H12" stroke="#dedede" stroke-width="1.3"/><path d="M16 15L24 23M24 15L16 23" stroke="#d8d8d8" stroke-width="3"/></svg>
<svg style="position:absolute;left:1369.8px;top:694.8px" width="25.1" height="24.5" viewBox="0 0 25.1 24.5"><rect x="8" y="0.7" width="16.4" height="22" fill="#f0f5fb" stroke="#4a6ab0" stroke-width="1.2"/><rect x="17" y="0.7" width="7.4" height="22" fill="#dfe8f5" stroke="#4a6ab0" stroke-width="1.2"/><rect x="19" y="3" width="3" height="3" fill="#3a5a9a"/><rect x="19" y="17" width="3" height="3" fill="#3a5a9a"/><path d="M3 13V10Q3 6 6.5 6Q10 6 10 10V13" stroke="#8a6a2a" stroke-width="1.8" fill="none"/><rect x="0.7" y="13" width="12" height="10.8" rx="1" fill="#e8b040" stroke="#9a6a1a"/></svg>
<svg style="position:absolute;left:1406.1px;top:692.8px" width="25" height="22.6" viewBox="0 0 25 22.6"><path d="M0.7 0.7H13L17 4.7V21.5H0.7Z" fill="#f4f7fc" stroke="#b09a60" stroke-width="1.2"/><path d="M3 7H12M3 10.5H12M3 14H10M3 17.5H9" stroke="#3a6ab0" stroke-width="1.3"/><path d="M21 5V15H15V12L10 16.5L15 21V18H24V5Z" fill="#f7dc8e" stroke="#b4832e" stroke-width="1.3" stroke-linejoin="round"/></svg>
<div style="position:absolute;left:1436px;top:688.3px;width:35.8px;height:35.9px;background:#e9e9e9;border:1.5px solid #c2c2c2"></div>
<div style="position:absolute;left:1472.7px;top:688.3px;width:35.3px;height:35.9px;background:#e9e9e9;border:1.5px solid #c2c2c2"></div>
<svg style="position:absolute;left:1441px;top:693px" width="26" height="24" viewBox="0 0 26 24"><path d="M2 12H11V20H2Z" fill="#cfe0f5" stroke="#2f6ab8" stroke-width="1.6"/><path d="M3.5 22.5H10M6.5 20V22" stroke="#2f6ab8" stroke-width="1.6"/><rect x="7" y="1" width="18" height="14" fill="#eef4fc" stroke="#2f6ab8" stroke-width="1.8"/><path d="M11 5.5H21M11 9.5H21" stroke="#2f6ab8" stroke-width="1.4"/></svg>
<svg style="position:absolute;left:1477.5px;top:693px" width="26" height="24" viewBox="0 0 26 24"><path d="M2 12H11V20H2Z" fill="#cfe0f5" stroke="#2f6ab8" stroke-width="1.6"/><path d="M3.5 22.5H10M6.5 20V22" stroke="#2f6ab8" stroke-width="1.6"/><rect x="7" y="1" width="18" height="14" fill="#eef4fc" stroke="#2f6ab8" stroke-width="1.8"/><path d="M10 4L16 10M16 4L10 10" stroke="#e03a3a" stroke-width="2.2"/><path d="M18 6H23M18 9.5H23" stroke="#2f6ab8" stroke-width="1.3"/></svg>
<div style="position:absolute;left:1513.9px;top:688.4px;width:1px;height:35.0px;background:#dadada"></div>
<svg style="position:absolute;left:1526.3px;top:695.5px" width="23.1" height="22" viewBox="0 0 23.1 22"><rect x="0.8" y="5.5" width="20" height="15.7" fill="#eef3fb" stroke="#756a4c" stroke-width="1.4"/><rect x="0.8" y="5.5" width="20" height="3" fill="#5a8fd6"/><path d="M11 14L16 9" stroke="#333" stroke-width="1.4"/><path d="M14 3Q18 -1 22 2Q24 6 20 10L16 12L12 7.5Z" fill="#3d9a3d" stroke="#2a6a2a"/></svg>
<svg style="position:absolute;left:1562.9px;top:695.5px" width="20.8" height="21.5" viewBox="0 0 20.8 21.5"><rect x="1" y="1" width="18.8" height="14" rx="2" fill="#f2f2f2" stroke="#dcdcdc" stroke-width="2"/><path d="M5 6H14M5 9.5H15" stroke="#dcdcdc" stroke-width="1.4"/><path d="M4 20H17" stroke="#dcdcdc" stroke-width="2"/></svg>
<svg style="position:absolute;left:1590.8px;top:705px" width="8" height="6" viewBox="0 0 8 6"><path d="M0 0H8L4.0 6Z" fill="#c8c8c8"/></svg>
<svg style="position:absolute;left:1610.3px;top:694.3px" width="25" height="23.5" viewBox="0 0 25 23.5"><rect x="0.8" y="3.8" width="22" height="18.9" fill="#f2f6fc" stroke="#857650" stroke-width="1.4"/><rect x="1" y="3.6" width="15" height="4.6" fill="#5c8fd6"/><path d="M1 5.5H15" stroke="#8ab4ea" stroke-width="1"/><path d="M3 22.3 Q16.25 20.5 19 9" stroke="#f6e2a0" stroke-width="2" fill="none"/><path d="M19 0.5L24.2 5.6L19 10.7L13.8 5.6Z" fill="#d9a84a" stroke="#a8782a" stroke-width="1.3" stroke-linejoin="round"/><path d="M19 2Q19.7 4.9 22.5 5.6Q19.7 6.3 19 9.2Q18.3 6.3 15.5 5.6Q18.3 4.9 19 2Z" fill="#fff6d0"/></svg>
<svg style="position:absolute;left:1640.5px;top:705px" width="8" height="6.2" viewBox="0 0 8 6.2"><path d="M0 0H8L4.0 6.2Z" fill="#000"/></svg>
<svg style="position:absolute;left:1660px;top:695px" width="23.1" height="24" viewBox="0 0 23.1 24"><rect x="0.7" y="0.7" width="15" height="18" fill="#eef0f4" stroke="#8a8a7a" stroke-width="1.2"/><rect x="6.5" y="5" width="16" height="18.3" fill="#fafafa" stroke="#8a7a5a" stroke-width="1.2"/><path d="M9 9H19M9 12H16M9 15H20M9 18H18" stroke="#333" stroke-width="1.5"/><path d="M2 5H5M2 9H5M2 13H5" stroke="#e0a030" stroke-width="1.4"/><path d="M9 12H12M9 18H12" stroke="#3a6ad0" stroke-width="1.5"/><path d="M13 15H15" stroke="#e03a3a" stroke-width="1.5"/></svg>
<div style="position:absolute;left:1689.7px;top:688.4px;width:36.0px;height:35.0px;background:#e9e9e9;border:1.5px solid #c2c2c2"></div>
<svg style="position:absolute;left:1695.5px;top:695px" width="25.8" height="23" viewBox="0 0 25.8 23"><path d="M1 20L8 1L14 18M4 12H12" stroke="#e07a7a" stroke-width="2.8" fill="none"/><path d="M24 10Q21 6 17 7Q10 9 11 16Q13 22 19 21Q23 20 24 17" stroke="#5ab0a0" stroke-width="3" fill="none"/></svg>
<svg style="position:absolute;left:1731.1px;top:692.9px" width="25.7" height="25.7" viewBox="0 0 25.7 25.7"><g transform="translate(12.85,12.85)"><circle r="9" fill="#7a8aa8" stroke="#4a5a78" stroke-width="1.2"/><rect x="-2.5" y="-12.6" width="5" height="5" fill="#7a8aa8" stroke="#4a5a78" transform="rotate(0)"/><rect x="-2.5" y="-12.6" width="5" height="5" fill="#7a8aa8" stroke="#4a5a78" transform="rotate(45)"/><rect x="-2.5" y="-12.6" width="5" height="5" fill="#7a8aa8" stroke="#4a5a78" transform="rotate(90)"/><rect x="-2.5" y="-12.6" width="5" height="5" fill="#7a8aa8" stroke="#4a5a78" transform="rotate(135)"/><rect x="-2.5" y="-12.6" width="5" height="5" fill="#7a8aa8" stroke="#4a5a78" transform="rotate(180)"/><rect x="-2.5" y="-12.6" width="5" height="5" fill="#7a8aa8" stroke="#4a5a78" transform="rotate(225)"/><rect x="-2.5" y="-12.6" width="5" height="5" fill="#7a8aa8" stroke="#4a5a78" transform="rotate(270)"/><rect x="-2.5" y="-12.6" width="5" height="5" fill="#7a8aa8" stroke="#4a5a78" transform="rotate(315)"/><circle r="8.3" fill="#7a8aa8"/><circle r="4" fill="#c8d0e0" stroke="#4a5a78"/></g></svg>
<div style="position:absolute;left:1327.2px;top:949.2px;width:2.6px;height:2.6px;background:#aaa590;box-shadow:0 1px 0 #fff"></div>
<div style="position:absolute;left:1327.2px;top:956.7px;width:2.6px;height:2.6px;background:#aaa590;box-shadow:0 1px 0 #fff"></div>
<div style="position:absolute;left:1327.2px;top:963.9px;width:2.6px;height:2.6px;background:#aaa590;box-shadow:0 1px 0 #fff"></div>
<div style="position:absolute;left:1327.2px;top:971.3px;width:2.6px;height:2.6px;background:#aaa590;box-shadow:0 1px 0 #fff"></div>
<div style="position:absolute;left:1796.2px;top:943.2px;width:8.4px;height:35.7px;background:#ececec"></div>
<div style="position:absolute;left:1798.4px;top:949.2px;width:2.6px;height:2.6px;background:#aaa590;box-shadow:0 1px 0 #fff"></div>
<div style="position:absolute;left:1798.4px;top:956.7px;width:2.6px;height:2.6px;background:#aaa590;box-shadow:0 1px 0 #fff"></div>
<div style="position:absolute;left:1798.4px;top:963.9px;width:2.6px;height:2.6px;background:#aaa590;box-shadow:0 1px 0 #fff"></div>
<div style="position:absolute;left:1798.4px;top:971.3px;width:2.6px;height:2.6px;background:#aaa590;box-shadow:0 1px 0 #fff"></div>
<svg style="position:absolute;left:1816.5px;top:949.5px" width="14" height="26" viewBox="0 0 14 26"><path d="M7 1Q13 1 13 8Q13 11 10.5 14V18H3.5V14Q1 11 1 8Q1 1 7 1Z" fill="#fdf6d8" stroke="#e8b030" stroke-width="1.5"/><rect x="3.5" y="18" width="7" height="6" fill="#5a6a88"/></svg>
<svg style="position:absolute;left:0px;top:974px" width="7" height="7" viewBox="0 0 7 7"><path d="M0 0L7 7H0Z" fill="#9a9a9a"/></svg>
<svg style="position:absolute;left:0px;top:0px" width="7" height="6" viewBox="0 0 7 6"><path d="M0 0H7L0 6Z" fill="#c05050"/></svg>
</body></html>
